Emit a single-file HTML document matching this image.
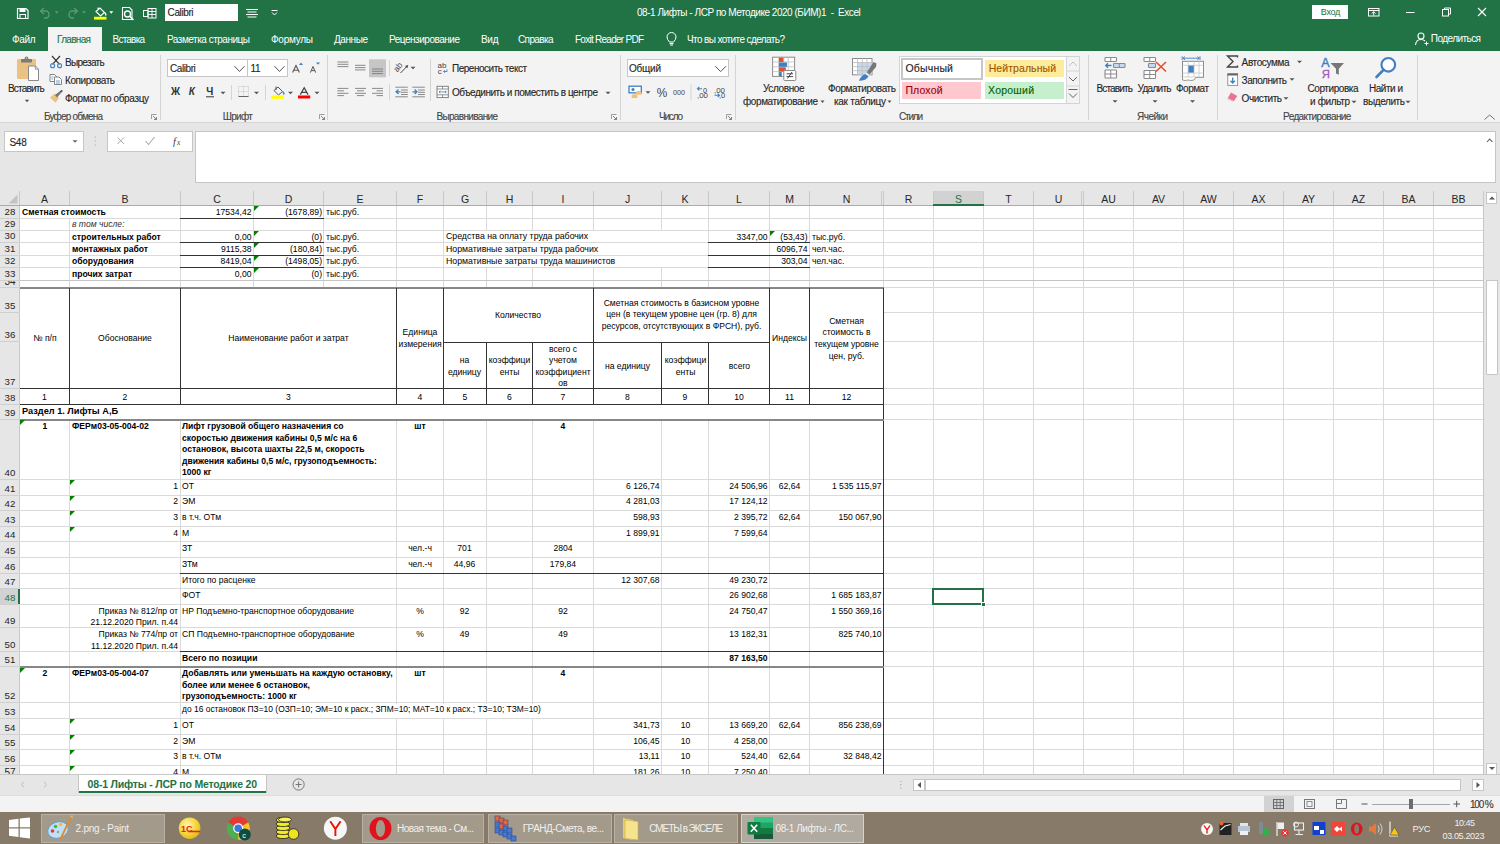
<!DOCTYPE html><html><head><meta charset="utf-8"><style>html,body{margin:0;padding:0;width:1500px;height:844px;overflow:hidden;background:#fff;position:relative}.a{position:absolute}.t{white-space:pre;font-family:"Liberation Sans",sans-serif}svg{display:block}</style></head><body>
<div class="a" style="left:0px;top:0px;width:1500px;height:51px;background:#217346;"></div>
<div class="a" style="left:48px;top:27px;width:54px;height:24px;background:#f3f3f3;"></div>
<div class="a" style="left:0px;top:51px;width:1500px;height:72px;background:#f3f3f3;"></div>
<div class="a" style="left:0px;top:122px;width:1500px;height:1px;background:#d6d6d6"></div>
<div class="a" style="left:0px;top:123px;width:1500px;height:68px;background:#e6e6e6;"></div>
<div class="a t" style="top:7.04px;left:637px;font-size:10px;line-height:12px;color:#fff;letter-spacing:-0.466px;">08-1 Лифты - ЛСР по Методике 2020 (БИМ)1&nbsp; -&nbsp; Excel</div>
<div class="a" style="left:165px;top:4px;width:73px;height:17px;background:#fff;"></div>
<div class="a t" style="top:7.04px;left:167.6px;font-size:10px;line-height:12px;color:#222;letter-spacing:-0.390px;-webkit-text-stroke:0.12px currentColor;">Calibri</div>
<div class="a" style="left:1312px;top:5px;width:36px;height:14px;background:#fff;"></div>
<div class="a t" style="top:7.38px;left:1320.8px;font-size:9px;line-height:11px;color:#217346;letter-spacing:-0.300px;-webkit-text-stroke:0.12px currentColor;-webkit-text-stroke:0">Вход</div>
<div class="a t" style="top:33.53px;left:12px;font-size:10px;line-height:12px;color:#fff;letter-spacing:-0.300px;">Файл</div>
<div class="a t" style="top:33.53px;left:57px;font-size:10px;line-height:12px;color:#217346;letter-spacing:-0.677px;-webkit-text-stroke:0.12px currentColor;">Главная</div>
<div class="a t" style="top:33.53px;left:112.6px;font-size:10px;line-height:12px;color:#fff;letter-spacing:-0.795px;">Вставка</div>
<div class="a t" style="top:33.53px;left:167px;font-size:10px;line-height:12px;color:#fff;letter-spacing:-0.482px;">Разметка страницы</div>
<div class="a t" style="top:33.53px;left:271px;font-size:10px;line-height:12px;color:#fff;letter-spacing:-0.253px;">Формулы</div>
<div class="a t" style="top:33.53px;left:334px;font-size:10px;line-height:12px;color:#fff;letter-spacing:-0.426px;">Данные</div>
<div class="a t" style="top:33.53px;left:389px;font-size:10px;line-height:12px;color:#fff;letter-spacing:-0.478px;">Рецензирование</div>
<div class="a t" style="top:33.53px;left:481px;font-size:10px;line-height:12px;color:#fff;letter-spacing:-0.300px;">Вид</div>
<div class="a t" style="top:33.53px;left:518px;font-size:10px;line-height:12px;color:#fff;letter-spacing:-0.621px;">Справка</div>
<div class="a t" style="top:33.53px;left:575px;font-size:10px;line-height:12px;color:#fff;letter-spacing:-0.735px;">Foxit Reader PDF</div>
<div class="a t" style="top:33.53px;left:687px;font-size:10px;line-height:12px;color:#fff;letter-spacing:-0.597px;">Что вы хотите сделать?</div>
<div class="a t" style="top:33.03px;left:1430.8px;font-size:10px;line-height:12px;color:#fff;letter-spacing:-0.558px;">Поделиться</div>
<div class="a t" style="top:110.53px;left:44px;font-size:10px;line-height:12px;color:#444;letter-spacing:-0.814px;-webkit-text-stroke:0.12px currentColor;">Буфер обмена</div>
<div class="a t" style="top:110.53px;left:222.8px;font-size:10px;line-height:12px;color:#444;letter-spacing:-0.725px;-webkit-text-stroke:0.12px currentColor;">Шрифт</div>
<div class="a t" style="top:110.53px;left:436.4px;font-size:10px;line-height:12px;color:#444;letter-spacing:-0.658px;-webkit-text-stroke:0.12px currentColor;">Выравнивание</div>
<div class="a t" style="top:110.53px;left:659px;font-size:10px;line-height:12px;color:#444;letter-spacing:-1.190px;-webkit-text-stroke:0.12px currentColor;">Число</div>
<div class="a t" style="top:110.53px;left:899px;font-size:10px;line-height:12px;color:#444;letter-spacing:-1.200px;-webkit-text-stroke:0.12px currentColor;">Стили</div>
<div class="a t" style="top:110.53px;left:1137px;font-size:10px;line-height:12px;color:#444;letter-spacing:-0.508px;-webkit-text-stroke:0.12px currentColor;">Ячейки</div>
<div class="a t" style="top:110.53px;left:1283px;font-size:10px;line-height:12px;color:#444;letter-spacing:-0.598px;-webkit-text-stroke:0.12px currentColor;">Редактирование</div>
<div class="a" style="left:160px;top:55px;width:1px;height:65px;background:#d4d4d4"></div>
<div class="a" style="left:327px;top:55px;width:1px;height:65px;background:#d4d4d4"></div>
<div class="a" style="left:620px;top:55px;width:1px;height:65px;background:#d4d4d4"></div>
<div class="a" style="left:735px;top:55px;width:1px;height:65px;background:#d4d4d4"></div>
<div class="a" style="left:1088px;top:55px;width:1px;height:65px;background:#d4d4d4"></div>
<div class="a" style="left:1217px;top:55px;width:1px;height:65px;background:#d4d4d4"></div>
<div class="a" style="left:1417px;top:55px;width:1px;height:65px;background:#d4d4d4"></div>
<div class="a t" style="top:83.03px;left:8px;font-size:10px;line-height:12px;color:#262626;letter-spacing:-0.798px;-webkit-text-stroke:0.12px currentColor;">Вставить</div>
<div class="a t" style="top:56.53px;left:65px;font-size:10px;line-height:12px;color:#262626;letter-spacing:-0.683px;-webkit-text-stroke:0.12px currentColor;">Вырезать</div>
<div class="a t" style="top:74.53px;left:65px;font-size:10px;line-height:12px;color:#262626;letter-spacing:-0.427px;-webkit-text-stroke:0.12px currentColor;">Копировать</div>
<div class="a t" style="top:92.53px;left:65px;font-size:10px;line-height:12px;color:#262626;letter-spacing:-0.354px;-webkit-text-stroke:0.12px currentColor;">Формат по образцу</div>
<div class="a" style="left:167px;top:59px;width:81px;height:18px;background:#fff;border:1px solid #c6c6c6;box-sizing:border-box;"></div>
<div class="a" style="left:247px;top:59px;width:41px;height:18px;background:#fff;border:1px solid #c6c6c6;box-sizing:border-box;"></div>
<div class="a t" style="top:63.03px;left:170px;font-size:10px;line-height:12px;color:#262626;letter-spacing:-0.423px;-webkit-text-stroke:0.12px currentColor;">Calibri</div>
<div class="a t" style="top:63.03px;left:250.4px;font-size:10px;line-height:12px;color:#262626;letter-spacing:-0.300px;-webkit-text-stroke:0.12px currentColor;">11</div>
<div class="a t" style="top:63.03px;left:452px;font-size:10px;line-height:12px;color:#262626;letter-spacing:-0.481px;-webkit-text-stroke:0.12px currentColor;">Переносить текст</div>
<div class="a t" style="top:86.53px;left:452px;font-size:10px;line-height:12px;color:#262626;letter-spacing:-0.462px;-webkit-text-stroke:0.12px currentColor;">Объединить и поместить в центре</div>
<div class="a" style="left:627px;top:59px;width:102px;height:18px;background:#fff;border:1px solid #c6c6c6;box-sizing:border-box;"></div>
<div class="a t" style="top:63.03px;left:629px;font-size:10px;line-height:12px;color:#262626;letter-spacing:-0.226px;-webkit-text-stroke:0.12px currentColor;">Общий</div>
<div class="a t" style="top:83.03px;left:763px;font-size:10px;line-height:12px;color:#262626;letter-spacing:-0.364px;-webkit-text-stroke:0.12px currentColor;">Условное</div>
<div class="a t" style="top:95.53px;left:743px;font-size:10px;line-height:12px;color:#262626;letter-spacing:-0.407px;-webkit-text-stroke:0.12px currentColor;">форматирование</div>
<div class="a t" style="top:83.03px;left:828px;font-size:10px;line-height:12px;color:#262626;letter-spacing:-0.380px;-webkit-text-stroke:0.12px currentColor;">Форматировать</div>
<div class="a t" style="top:95.53px;left:834px;font-size:10px;line-height:12px;color:#262626;letter-spacing:-0.277px;-webkit-text-stroke:0.12px currentColor;">как таблицу</div>
<div class="a" style="left:899px;top:56px;width:168px;height:48px;background:#fff;border:1px solid #d4d4d4;box-sizing:border-box;"></div>
<div class="a" style="left:901px;top:58px;width:82px;height:22px;background:#fff;border:2px solid #c6c6c6;box-sizing:border-box;"></div>
<div class="a t" style="top:62.36px;left:905.4px;font-size:10.5px;line-height:13px;color:#222;letter-spacing:0.198px;-webkit-text-stroke:0.12px currentColor;">Обычный</div>
<div class="a" style="left:985px;top:60px;width:79px;height:17px;background:#ffeb9c;"></div>
<div class="a t" style="top:62.36px;left:988.7px;font-size:10.5px;line-height:13px;color:#9c5700;letter-spacing:0.072px;-webkit-text-stroke:0.12px currentColor;">Нейтральный</div>
<div class="a" style="left:902px;top:82px;width:79px;height:17px;background:#ffc7ce;"></div>
<div class="a t" style="top:84.36px;left:905.4px;font-size:10.5px;line-height:13px;color:#9c0006;letter-spacing:0.150px;-webkit-text-stroke:0.12px currentColor;">Плохой</div>
<div class="a" style="left:985px;top:82px;width:79px;height:17px;background:#c6efce;"></div>
<div class="a t" style="top:84.36px;left:988px;font-size:10.5px;line-height:13px;color:#006100;letter-spacing:0.240px;-webkit-text-stroke:0.12px currentColor;">Хороший</div>
<div class="a" style="left:1066px;top:56px;width:14px;height:48px;background:#f3f3f3;border:1px solid #d4d4d4;box-sizing:border-box;"></div>
<div class="a t" style="top:83.03px;left:1096.5px;font-size:10px;line-height:12px;color:#262626;letter-spacing:-0.841px;-webkit-text-stroke:0.12px currentColor;">Вставить</div>
<div class="a t" style="top:83.03px;left:1137.5px;font-size:10px;line-height:12px;color:#262626;letter-spacing:-0.696px;-webkit-text-stroke:0.12px currentColor;">Удалить</div>
<div class="a t" style="top:83.03px;left:1176px;font-size:10px;line-height:12px;color:#262626;letter-spacing:-0.505px;-webkit-text-stroke:0.12px currentColor;">Формат</div>
<div class="a t" style="top:56.53px;left:1241.6px;font-size:10px;line-height:12px;color:#262626;letter-spacing:-0.386px;-webkit-text-stroke:0.12px currentColor;">Автосумма</div>
<div class="a t" style="top:74.53px;left:1241.6px;font-size:10px;line-height:12px;color:#262626;letter-spacing:-0.462px;-webkit-text-stroke:0.12px currentColor;">Заполнить</div>
<div class="a t" style="top:92.53px;left:1241.6px;font-size:10px;line-height:12px;color:#262626;letter-spacing:-0.447px;-webkit-text-stroke:0.12px currentColor;">Очистить</div>
<div class="a t" style="top:83.03px;left:1307.5px;font-size:10px;line-height:12px;color:#262626;letter-spacing:-0.431px;-webkit-text-stroke:0.12px currentColor;">Сортировка</div>
<div class="a t" style="top:95.53px;left:1310px;font-size:10px;line-height:12px;color:#262626;letter-spacing:-0.369px;-webkit-text-stroke:0.12px currentColor;">и фильтр</div>
<div class="a t" style="top:83.03px;left:1369px;font-size:10px;line-height:12px;color:#262626;letter-spacing:-0.483px;-webkit-text-stroke:0.12px currentColor;">Найти и</div>
<div class="a t" style="top:95.53px;left:1363px;font-size:10px;line-height:12px;color:#262626;letter-spacing:-0.397px;-webkit-text-stroke:0.12px currentColor;">выделить</div>
<div class="a" style="left:4px;top:131px;width:80px;height:21px;background:#fff;border:1px solid #c6c6c6;box-sizing:border-box;"></div>
<div class="a t" style="top:136.53px;left:9.5px;font-size:10px;line-height:12px;color:#262626;letter-spacing:-0.300px;-webkit-text-stroke:0.12px currentColor;">S48</div>
<div class="a" style="left:107px;top:131px;width:86px;height:21px;background:#fff;border:1px solid #c6c6c6;box-sizing:border-box;"></div>
<div class="a" style="left:195px;top:131px;width:1301px;height:52px;background:#fff;border:1px solid #c6c6c6;box-sizing:border-box;"></div>
<div class="a" style="left:1484px;top:191px;width:16px;height:584px;background:#e6e6e6;"></div>
<div class="a" style="left:1486px;top:192px;width:11px;height:12px;background:#fff;border:1px solid #c6c6c6;box-sizing:border-box;"></div>
<div class="a" style="left:1486px;top:763px;width:11px;height:12px;background:#fff;border:1px solid #c6c6c6;box-sizing:border-box;"></div>
<div class="a" style="left:1486px;top:280px;width:12px;height:95px;background:#fff;border:1px solid #c6c6c6;box-sizing:border-box;"></div>
<div class="a" style="left:0px;top:775px;width:1500px;height:20px;background:#e6e6e6;"></div>
<div class="a" style="left:0px;top:774px;width:1500px;height:1px;background:#c6c6c6"></div>
<div class="a" style="left:78px;top:774px;width:189px;height:19px;background:#fff;"></div>
<div class="a" style="left:78px;top:774px;width:1px;height:19px;background:#c6c6c6"></div>
<div class="a" style="left:266px;top:774px;width:1px;height:19px;background:#c6c6c6"></div>
<div class="a" style="left:79px;top:791px;width:187px;height:2px;background:#217346"></div>
<div class="a t" style="top:778.36px;left:87.6px;font-size:10.5px;line-height:13px;color:#217346;letter-spacing:-0.198px;font-weight:bold;">08-1 Лифты - ЛСР по Методике 20</div>
<div class="a" style="left:913px;top:779px;width:12px;height:12px;background:#fff;border:1px solid #c6c6c6;box-sizing:border-box;"></div>
<div class="a" style="left:925px;top:779px;width:536px;height:12px;background:#fff;border:1px solid #c6c6c6;box-sizing:border-box;"></div>
<div class="a" style="left:1472px;top:779px;width:12px;height:12px;background:#fff;border:1px solid #c6c6c6;box-sizing:border-box;"></div>
<div class="a" style="left:0px;top:795px;width:1500px;height:18px;background:#f3f3f3;"></div>
<div class="a" style="left:0px;top:795px;width:1500px;height:1px;background:#dcdcdc"></div>
<div class="a" style="left:1264px;top:796px;width:30px;height:17px;background:#d2d2d2;"></div>
<div class="a t" style="top:798.53px;left:1470px;font-size:10px;line-height:12px;color:#333;letter-spacing:-1.200px;-webkit-text-stroke:0.12px currentColor;">100 %</div>
<div class="a" style="left:1372px;top:804px;width:78px;height:1px;background:#a6a6a6"></div>
<div class="a" style="left:1409px;top:799px;width:4px;height:10px;background:#6d6d6d;"></div>
<div class="a" style="left:0px;top:191px;width:1483px;height:14px;background:#e6e6e6;"></div>
<div class="a" style="left:0px;top:205px;width:19px;height:570px;background:#e6e6e6;"></div>
<div class="a" style="left:20px;top:206px;width:1463px;height:568px;background:#ffffff;"></div>
<svg class="a" style="left:8px;top:194px;" width="10" height="10" viewBox="0 0 10 10"><path d="M9.5 0.5 L9.5 9.5 L0.5 9.5 Z" fill="#c3c3c3"/></svg>
<div class="a" style="left:69px;top:191px;width:1px;height:14px;background:#c9c9c9"></div>
<div class="a" style="left:180px;top:191px;width:1px;height:14px;background:#c9c9c9"></div>
<div class="a" style="left:253px;top:191px;width:1px;height:14px;background:#c9c9c9"></div>
<div class="a" style="left:323px;top:191px;width:1px;height:14px;background:#c9c9c9"></div>
<div class="a" style="left:396px;top:191px;width:1px;height:14px;background:#c9c9c9"></div>
<div class="a" style="left:443px;top:191px;width:1px;height:14px;background:#c9c9c9"></div>
<div class="a" style="left:486px;top:191px;width:1px;height:14px;background:#c9c9c9"></div>
<div class="a" style="left:532px;top:191px;width:1px;height:14px;background:#c9c9c9"></div>
<div class="a" style="left:593px;top:191px;width:1px;height:14px;background:#c9c9c9"></div>
<div class="a" style="left:661px;top:191px;width:1px;height:14px;background:#c9c9c9"></div>
<div class="a" style="left:708px;top:191px;width:1px;height:14px;background:#c9c9c9"></div>
<div class="a" style="left:769px;top:191px;width:1px;height:14px;background:#c9c9c9"></div>
<div class="a" style="left:809px;top:191px;width:1px;height:14px;background:#c9c9c9"></div>
<div class="a" style="left:883px;top:191px;width:1px;height:14px;background:#c9c9c9"></div>
<div class="a" style="left:933px;top:191px;width:1px;height:14px;background:#c9c9c9"></div>
<div class="a" style="left:983px;top:191px;width:1px;height:14px;background:#c9c9c9"></div>
<div class="a" style="left:1033px;top:191px;width:1px;height:14px;background:#c9c9c9"></div>
<div class="a" style="left:1083px;top:191px;width:1px;height:14px;background:#c9c9c9"></div>
<div class="a" style="left:1133px;top:191px;width:1px;height:14px;background:#c9c9c9"></div>
<div class="a" style="left:1183px;top:191px;width:1px;height:14px;background:#c9c9c9"></div>
<div class="a" style="left:1233px;top:191px;width:1px;height:14px;background:#c9c9c9"></div>
<div class="a" style="left:1283px;top:191px;width:1px;height:14px;background:#c9c9c9"></div>
<div class="a" style="left:1333px;top:191px;width:1px;height:14px;background:#c9c9c9"></div>
<div class="a" style="left:1383px;top:191px;width:1px;height:14px;background:#c9c9c9"></div>
<div class="a" style="left:1433px;top:191px;width:1px;height:14px;background:#c9c9c9"></div>
<div class="a" style="left:1483px;top:191px;width:1px;height:14px;background:#c9c9c9"></div>
<div class="a" style="left:19px;top:191px;width:1px;height:584px;background:#c9c9c9"></div>
<div class="a" style="left:881px;top:191px;width:1px;height:14px;background:#c9c9c9"></div>
<div class="a" style="left:1081px;top:191px;width:1px;height:14px;background:#c9c9c9"></div>
<div class="a" style="left:0px;top:205px;width:1483px;height:1px;background:#ababab"></div>
<div class="a" style="left:934px;top:191px;width:49px;height:14px;background:#d2d2d2;"></div>
<div class="a t" style="top:192.86px;font-size:10.5px;line-height:13px;color:#262626;left:-255.5px;width:600px;text-align:center;">A</div>
<div class="a t" style="top:192.86px;font-size:10.5px;line-height:13px;color:#262626;left:-175.0px;width:600px;text-align:center;">B</div>
<div class="a t" style="top:192.86px;font-size:10.5px;line-height:13px;color:#262626;left:-83.0px;width:600px;text-align:center;">C</div>
<div class="a t" style="top:192.86px;font-size:10.5px;line-height:13px;color:#262626;left:-11.5px;width:600px;text-align:center;">D</div>
<div class="a t" style="top:192.86px;font-size:10.5px;line-height:13px;color:#262626;left:60.0px;width:600px;text-align:center;">E</div>
<div class="a t" style="top:192.86px;font-size:10.5px;line-height:13px;color:#262626;left:120.0px;width:600px;text-align:center;">F</div>
<div class="a t" style="top:192.86px;font-size:10.5px;line-height:13px;color:#262626;left:165.0px;width:600px;text-align:center;">G</div>
<div class="a t" style="top:192.86px;font-size:10.5px;line-height:13px;color:#262626;left:209.5px;width:600px;text-align:center;">H</div>
<div class="a t" style="top:192.86px;font-size:10.5px;line-height:13px;color:#262626;left:263.0px;width:600px;text-align:center;">I</div>
<div class="a t" style="top:192.86px;font-size:10.5px;line-height:13px;color:#262626;left:327.5px;width:600px;text-align:center;">J</div>
<div class="a t" style="top:192.86px;font-size:10.5px;line-height:13px;color:#262626;left:385.0px;width:600px;text-align:center;">K</div>
<div class="a t" style="top:192.86px;font-size:10.5px;line-height:13px;color:#262626;left:439.0px;width:600px;text-align:center;">L</div>
<div class="a t" style="top:192.86px;font-size:10.5px;line-height:13px;color:#262626;left:489.5px;width:600px;text-align:center;">M</div>
<div class="a t" style="top:192.86px;font-size:10.5px;line-height:13px;color:#262626;left:546.5px;width:600px;text-align:center;">N</div>
<div class="a t" style="top:192.86px;font-size:10.5px;line-height:13px;color:#262626;left:608.5px;width:600px;text-align:center;">R</div>
<div class="a t" style="top:192.86px;font-size:10.5px;line-height:13px;color:#217346;left:658.5px;width:600px;text-align:center;">S</div>
<div class="a t" style="top:192.86px;font-size:10.5px;line-height:13px;color:#262626;left:708.5px;width:600px;text-align:center;">T</div>
<div class="a t" style="top:192.86px;font-size:10.5px;line-height:13px;color:#262626;left:758.5px;width:600px;text-align:center;">U</div>
<div class="a t" style="top:192.86px;font-size:10.5px;line-height:13px;color:#262626;left:808.5px;width:600px;text-align:center;">AU</div>
<div class="a t" style="top:192.86px;font-size:10.5px;line-height:13px;color:#262626;left:858.5px;width:600px;text-align:center;">AV</div>
<div class="a t" style="top:192.86px;font-size:10.5px;line-height:13px;color:#262626;left:908.5px;width:600px;text-align:center;">AW</div>
<div class="a t" style="top:192.86px;font-size:10.5px;line-height:13px;color:#262626;left:958.5px;width:600px;text-align:center;">AX</div>
<div class="a t" style="top:192.86px;font-size:10.5px;line-height:13px;color:#262626;left:1008.5px;width:600px;text-align:center;">AY</div>
<div class="a t" style="top:192.86px;font-size:10.5px;line-height:13px;color:#262626;left:1058.5px;width:600px;text-align:center;">AZ</div>
<div class="a t" style="top:192.86px;font-size:10.5px;line-height:13px;color:#262626;left:1108.5px;width:600px;text-align:center;">BA</div>
<div class="a t" style="top:192.86px;font-size:10.5px;line-height:13px;color:#262626;left:1158.5px;width:600px;text-align:center;">BB</div>
<div class="a" style="left:933px;top:204px;width:51px;height:2px;background:#217346"></div>
<div class="a" style="left:69px;top:218px;width:1px;height:556px;background:#dadada"></div>
<div class="a" style="left:180px;top:206px;width:1px;height:568px;background:#dadada"></div>
<div class="a" style="left:253px;top:206px;width:1px;height:214px;background:#dadada"></div>
<div class="a" style="left:323px;top:206px;width:1px;height:214px;background:#dadada"></div>
<div class="a" style="left:396px;top:206px;width:1px;height:498px;background:#dadada"></div>
<div class="a" style="left:396px;top:719px;width:1px;height:55px;background:#dadada"></div>
<div class="a" style="left:443px;top:206px;width:1px;height:498px;background:#dadada"></div>
<div class="a" style="left:443px;top:719px;width:1px;height:55px;background:#dadada"></div>
<div class="a" style="left:486px;top:206px;width:1px;height:25px;background:#dadada"></div>
<div class="a" style="left:486px;top:267px;width:1px;height:437px;background:#dadada"></div>
<div class="a" style="left:486px;top:719px;width:1px;height:55px;background:#dadada"></div>
<div class="a" style="left:532px;top:206px;width:1px;height:25px;background:#dadada"></div>
<div class="a" style="left:532px;top:267px;width:1px;height:437px;background:#dadada"></div>
<div class="a" style="left:532px;top:719px;width:1px;height:55px;background:#dadada"></div>
<div class="a" style="left:593px;top:206px;width:1px;height:25px;background:#dadada"></div>
<div class="a" style="left:593px;top:267px;width:1px;height:507px;background:#dadada"></div>
<div class="a" style="left:661px;top:206px;width:1px;height:25px;background:#dadada"></div>
<div class="a" style="left:661px;top:267px;width:1px;height:507px;background:#dadada"></div>
<div class="a" style="left:708px;top:206px;width:1px;height:568px;background:#dadada"></div>
<div class="a" style="left:769px;top:206px;width:1px;height:568px;background:#dadada"></div>
<div class="a" style="left:809px;top:206px;width:1px;height:568px;background:#dadada"></div>
<div class="a" style="left:883px;top:206px;width:1px;height:568px;background:#dadada"></div>
<div class="a" style="left:933px;top:206px;width:1px;height:568px;background:#dadada"></div>
<div class="a" style="left:983px;top:206px;width:1px;height:568px;background:#dadada"></div>
<div class="a" style="left:1033px;top:206px;width:1px;height:568px;background:#dadada"></div>
<div class="a" style="left:1083px;top:206px;width:1px;height:568px;background:#dadada"></div>
<div class="a" style="left:1133px;top:206px;width:1px;height:568px;background:#dadada"></div>
<div class="a" style="left:1183px;top:206px;width:1px;height:568px;background:#dadada"></div>
<div class="a" style="left:1233px;top:206px;width:1px;height:568px;background:#dadada"></div>
<div class="a" style="left:1283px;top:206px;width:1px;height:568px;background:#dadada"></div>
<div class="a" style="left:1333px;top:206px;width:1px;height:568px;background:#dadada"></div>
<div class="a" style="left:1383px;top:206px;width:1px;height:568px;background:#dadada"></div>
<div class="a" style="left:1433px;top:206px;width:1px;height:568px;background:#dadada"></div>
<div class="a" style="left:1483px;top:206px;width:1px;height:568px;background:#dadada"></div>
<div class="a" style="left:0px;top:218px;width:1483px;height:1px;background:#dadada"></div>
<div class="a" style="left:0px;top:230px;width:1483px;height:1px;background:#dadada"></div>
<div class="a" style="left:0px;top:242px;width:1483px;height:1px;background:#dadada"></div>
<div class="a" style="left:0px;top:255px;width:1483px;height:1px;background:#dadada"></div>
<div class="a" style="left:0px;top:267px;width:1483px;height:1px;background:#dadada"></div>
<div class="a" style="left:0px;top:280px;width:1483px;height:1px;background:#dadada"></div>
<div class="a" style="left:0px;top:287px;width:1483px;height:1px;background:#dadada"></div>
<div class="a" style="left:0px;top:312px;width:1483px;height:1px;background:#dadada"></div>
<div class="a" style="left:0px;top:341px;width:1483px;height:1px;background:#dadada"></div>
<div class="a" style="left:0px;top:388px;width:1483px;height:1px;background:#dadada"></div>
<div class="a" style="left:0px;top:404px;width:1483px;height:1px;background:#dadada"></div>
<div class="a" style="left:0px;top:419px;width:1483px;height:1px;background:#dadada"></div>
<div class="a" style="left:0px;top:479px;width:1483px;height:1px;background:#dadada"></div>
<div class="a" style="left:0px;top:495px;width:1483px;height:1px;background:#dadada"></div>
<div class="a" style="left:0px;top:510px;width:1483px;height:1px;background:#dadada"></div>
<div class="a" style="left:0px;top:526px;width:1483px;height:1px;background:#dadada"></div>
<div class="a" style="left:0px;top:541px;width:1483px;height:1px;background:#dadada"></div>
<div class="a" style="left:0px;top:557px;width:1483px;height:1px;background:#dadada"></div>
<div class="a" style="left:0px;top:573px;width:1483px;height:1px;background:#dadada"></div>
<div class="a" style="left:0px;top:588px;width:1483px;height:1px;background:#dadada"></div>
<div class="a" style="left:0px;top:604px;width:1483px;height:1px;background:#dadada"></div>
<div class="a" style="left:0px;top:627px;width:1483px;height:1px;background:#dadada"></div>
<div class="a" style="left:0px;top:651px;width:1483px;height:1px;background:#dadada"></div>
<div class="a" style="left:0px;top:666px;width:1483px;height:1px;background:#dadada"></div>
<div class="a" style="left:0px;top:702px;width:1483px;height:1px;background:#dadada"></div>
<div class="a" style="left:0px;top:718px;width:1483px;height:1px;background:#dadada"></div>
<div class="a" style="left:0px;top:734px;width:1483px;height:1px;background:#dadada"></div>
<div class="a" style="left:0px;top:749px;width:1483px;height:1px;background:#dadada"></div>
<div class="a" style="left:0px;top:765px;width:1483px;height:1px;background:#dadada"></div>
<div class="a" style="left:0px;top:218px;width:19px;height:1px;background:#cfcfcf"></div>
<div class="a" style="left:0px;top:230px;width:19px;height:1px;background:#cfcfcf"></div>
<div class="a" style="left:0px;top:242px;width:19px;height:1px;background:#cfcfcf"></div>
<div class="a" style="left:0px;top:255px;width:19px;height:1px;background:#cfcfcf"></div>
<div class="a" style="left:0px;top:267px;width:19px;height:1px;background:#cfcfcf"></div>
<div class="a" style="left:0px;top:280px;width:19px;height:1px;background:#cfcfcf"></div>
<div class="a" style="left:0px;top:287px;width:19px;height:1px;background:#cfcfcf"></div>
<div class="a" style="left:0px;top:312px;width:19px;height:1px;background:#cfcfcf"></div>
<div class="a" style="left:0px;top:341px;width:19px;height:1px;background:#cfcfcf"></div>
<div class="a" style="left:0px;top:388px;width:19px;height:1px;background:#cfcfcf"></div>
<div class="a" style="left:0px;top:404px;width:19px;height:1px;background:#cfcfcf"></div>
<div class="a" style="left:0px;top:419px;width:19px;height:1px;background:#cfcfcf"></div>
<div class="a" style="left:0px;top:479px;width:19px;height:1px;background:#cfcfcf"></div>
<div class="a" style="left:0px;top:495px;width:19px;height:1px;background:#cfcfcf"></div>
<div class="a" style="left:0px;top:510px;width:19px;height:1px;background:#cfcfcf"></div>
<div class="a" style="left:0px;top:526px;width:19px;height:1px;background:#cfcfcf"></div>
<div class="a" style="left:0px;top:541px;width:19px;height:1px;background:#cfcfcf"></div>
<div class="a" style="left:0px;top:557px;width:19px;height:1px;background:#cfcfcf"></div>
<div class="a" style="left:0px;top:573px;width:19px;height:1px;background:#cfcfcf"></div>
<div class="a" style="left:0px;top:588px;width:19px;height:1px;background:#cfcfcf"></div>
<div class="a" style="left:0px;top:604px;width:19px;height:1px;background:#cfcfcf"></div>
<div class="a" style="left:0px;top:627px;width:19px;height:1px;background:#cfcfcf"></div>
<div class="a" style="left:0px;top:651px;width:19px;height:1px;background:#cfcfcf"></div>
<div class="a" style="left:0px;top:666px;width:19px;height:1px;background:#cfcfcf"></div>
<div class="a" style="left:0px;top:702px;width:19px;height:1px;background:#cfcfcf"></div>
<div class="a" style="left:0px;top:718px;width:19px;height:1px;background:#cfcfcf"></div>
<div class="a" style="left:0px;top:734px;width:19px;height:1px;background:#cfcfcf"></div>
<div class="a" style="left:0px;top:749px;width:19px;height:1px;background:#cfcfcf"></div>
<div class="a" style="left:0px;top:765px;width:19px;height:1px;background:#cfcfcf"></div>
<div class="a" style="left:20px;top:280px;width:1463px;height:1px;background:#c4c4c4"></div>
<div class="a" style="left:1483px;top:205px;width:1px;height:570px;background:#c6c6c6"></div>
<div class="a" style="left:0px;top:774px;width:1484px;height:1px;background:#c6c6c6"></div>
<div class="a" style="left:0px;top:589px;width:19px;height:15px;background:#d2d2d2;"></div>
<div class="a" style="left:18px;top:589px;width:2px;height:15px;background:#217346"></div>
<div class="a t" style="top:205.94px;font-size:9.7px;line-height:12px;color:#262626;left:-290px;width:600px;text-align:center;">28</div>
<div class="a t" style="top:217.94px;font-size:9.7px;line-height:12px;color:#262626;left:-290px;width:600px;text-align:center;">29</div>
<div class="a t" style="top:229.94px;font-size:9.7px;line-height:12px;color:#262626;left:-290px;width:600px;text-align:center;">30</div>
<div class="a t" style="top:242.94px;font-size:9.7px;line-height:12px;color:#262626;left:-290px;width:600px;text-align:center;">31</div>
<div class="a t" style="top:254.94px;font-size:9.7px;line-height:12px;color:#262626;left:-290px;width:600px;text-align:center;">32</div>
<div class="a t" style="top:267.94px;font-size:9.7px;line-height:12px;color:#262626;left:-290px;width:600px;text-align:center;">33</div>
<div class="a" style="left:0px;top:281px;width:19px;height:6px;overflow:hidden">
<div class="a" style="left:0px;top:-281px;width:1500px;height:844px">
<div class="a t" style="top:275.84px;font-size:10px;line-height:12px;color:#262626;left:-290px;width:600px;text-align:center;">34</div>
</div></div>
<div class="a t" style="top:300.14px;font-size:9.7px;line-height:12px;color:#262626;left:-290px;width:600px;text-align:center;">35</div>
<div class="a t" style="top:329.14px;font-size:9.7px;line-height:12px;color:#262626;left:-290px;width:600px;text-align:center;">36</div>
<div class="a t" style="top:376.14px;font-size:9.7px;line-height:12px;color:#262626;left:-290px;width:600px;text-align:center;">37</div>
<div class="a t" style="top:392.14px;font-size:9.7px;line-height:12px;color:#262626;left:-290px;width:600px;text-align:center;">38</div>
<div class="a t" style="top:407.14px;font-size:9.7px;line-height:12px;color:#262626;left:-290px;width:600px;text-align:center;">39</div>
<div class="a t" style="top:467.14px;font-size:9.7px;line-height:12px;color:#262626;left:-290px;width:600px;text-align:center;">40</div>
<div class="a t" style="top:483.14px;font-size:9.7px;line-height:12px;color:#262626;left:-290px;width:600px;text-align:center;">41</div>
<div class="a t" style="top:498.14px;font-size:9.7px;line-height:12px;color:#262626;left:-290px;width:600px;text-align:center;">42</div>
<div class="a t" style="top:514.14px;font-size:9.7px;line-height:12px;color:#262626;left:-290px;width:600px;text-align:center;">43</div>
<div class="a t" style="top:529.14px;font-size:9.7px;line-height:12px;color:#262626;left:-290px;width:600px;text-align:center;">44</div>
<div class="a t" style="top:545.14px;font-size:9.7px;line-height:12px;color:#262626;left:-290px;width:600px;text-align:center;">45</div>
<div class="a t" style="top:561.14px;font-size:9.7px;line-height:12px;color:#262626;left:-290px;width:600px;text-align:center;">46</div>
<div class="a t" style="top:576.14px;font-size:9.7px;line-height:12px;color:#262626;left:-290px;width:600px;text-align:center;">47</div>
<div class="a t" style="top:592.14px;font-size:9.7px;line-height:12px;color:#217346;left:-290px;width:600px;text-align:center;">48</div>
<div class="a t" style="top:615.14px;font-size:9.7px;line-height:12px;color:#262626;left:-290px;width:600px;text-align:center;">49</div>
<div class="a t" style="top:639.14px;font-size:9.7px;line-height:12px;color:#262626;left:-290px;width:600px;text-align:center;">50</div>
<div class="a t" style="top:654.14px;font-size:9.7px;line-height:12px;color:#262626;left:-290px;width:600px;text-align:center;">51</div>
<div class="a t" style="top:690.14px;font-size:9.7px;line-height:12px;color:#262626;left:-290px;width:600px;text-align:center;">52</div>
<div class="a t" style="top:706.14px;font-size:9.7px;line-height:12px;color:#262626;left:-290px;width:600px;text-align:center;">53</div>
<div class="a t" style="top:722.14px;font-size:9.7px;line-height:12px;color:#262626;left:-290px;width:600px;text-align:center;">54</div>
<div class="a t" style="top:737.14px;font-size:9.7px;line-height:12px;color:#262626;left:-290px;width:600px;text-align:center;">55</div>
<div class="a t" style="top:753.14px;font-size:9.7px;line-height:12px;color:#262626;left:-290px;width:600px;text-align:center;">56</div>
<div class="a" style="left:0px;top:766px;width:19px;height:8px;overflow:hidden">
<div class="a" style="left:0px;top:-766px;width:1500px;height:844px">
<div class="a t" style="top:766.53px;font-size:10px;line-height:12px;color:#262626;left:-290px;width:600px;text-align:center;">57</div>
</div></div>
<div class="a t" style="top:207.02px;font-size:8.6px;line-height:10px;color:#000;font-weight:bold;left:22px;">Сметная стоимость</div>
<div class="a t" style="top:207.02px;font-size:8.6px;line-height:10px;color:#000;left:-348.5px;width:600px;text-align:right;">17534,42</div>
<svg class="a" style="left:254px;top:206px;" width="5" height="5" viewBox="0 0 5 5"><path d="M0 0 L5 0 L0 5 Z" fill="#008000"/></svg>
<div class="a t" style="top:207.02px;font-size:8.6px;line-height:10px;color:#000;left:-278px;width:600px;text-align:right;">(1678,89)</div>
<div class="a t" style="top:207.02px;font-size:8.6px;line-height:10px;color:#000;left:326px;">тыс.руб.</div>
<div class="a t" style="top:219.02px;font-size:8.6px;line-height:10px;color:#333;font-style:italic;left:72px;">в том числе:</div>
<div class="a t" style="top:231.52px;font-size:8.6px;line-height:10px;color:#000;font-weight:bold;left:72px;">строительных работ</div>
<div class="a t" style="top:231.52px;font-size:8.6px;line-height:10px;color:#000;left:-348.5px;width:600px;text-align:right;">0,00</div>
<svg class="a" style="left:254px;top:231px;" width="5" height="5" viewBox="0 0 5 5"><path d="M0 0 L5 0 L0 5 Z" fill="#008000"/></svg>
<div class="a t" style="top:231.52px;font-size:8.6px;line-height:10px;color:#000;left:-278px;width:600px;text-align:right;">(0)</div>
<div class="a t" style="top:231.52px;font-size:8.6px;line-height:10px;color:#000;left:326px;">тыс.руб.</div>
<div class="a t" style="top:243.62px;font-size:8.6px;line-height:10px;color:#000;font-weight:bold;left:72px;">монтажных работ</div>
<div class="a t" style="top:243.62px;font-size:8.6px;line-height:10px;color:#000;left:-348.5px;width:600px;text-align:right;">9115,38</div>
<svg class="a" style="left:254px;top:243px;" width="5" height="5" viewBox="0 0 5 5"><path d="M0 0 L5 0 L0 5 Z" fill="#008000"/></svg>
<div class="a t" style="top:243.62px;font-size:8.6px;line-height:10px;color:#000;left:-278px;width:600px;text-align:right;">(180,84)</div>
<div class="a t" style="top:243.62px;font-size:8.6px;line-height:10px;color:#000;left:326px;">тыс.руб.</div>
<div class="a t" style="top:256.32px;font-size:8.6px;line-height:10px;color:#000;font-weight:bold;left:72px;">оборудования</div>
<div class="a t" style="top:256.32px;font-size:8.6px;line-height:10px;color:#000;left:-348.5px;width:600px;text-align:right;">8419,04</div>
<svg class="a" style="left:254px;top:256px;" width="5" height="5" viewBox="0 0 5 5"><path d="M0 0 L5 0 L0 5 Z" fill="#008000"/></svg>
<div class="a t" style="top:256.32px;font-size:8.6px;line-height:10px;color:#000;left:-278px;width:600px;text-align:right;">(1498,05)</div>
<div class="a t" style="top:256.32px;font-size:8.6px;line-height:10px;color:#000;left:326px;">тыс.руб.</div>
<div class="a t" style="top:268.72px;font-size:8.6px;line-height:10px;color:#000;font-weight:bold;left:72px;">прочих затрат</div>
<div class="a t" style="top:268.72px;font-size:8.6px;line-height:10px;color:#000;left:-348.5px;width:600px;text-align:right;">0,00</div>
<svg class="a" style="left:254px;top:268px;" width="5" height="5" viewBox="0 0 5 5"><path d="M0 0 L5 0 L0 5 Z" fill="#008000"/></svg>
<div class="a t" style="top:268.72px;font-size:8.6px;line-height:10px;color:#000;left:-278px;width:600px;text-align:right;">(0)</div>
<div class="a t" style="top:268.72px;font-size:8.6px;line-height:10px;color:#000;left:326px;">тыс.руб.</div>
<div class="a" style="left:180px;top:218px;width:144px;height:1px;background:#333333"></div>
<div class="a" style="left:180px;top:242px;width:144px;height:1px;background:#333333"></div>
<div class="a" style="left:180px;top:255px;width:144px;height:1px;background:#333333"></div>
<div class="a" style="left:180px;top:267px;width:144px;height:1px;background:#333333"></div>
<div class="a t" style="top:231.47px;font-size:8.75px;line-height:10px;color:#000;left:446px;">Средства на оплату труда рабочих</div>
<div class="a t" style="top:231.52px;font-size:8.6px;line-height:10px;color:#000;left:167.5px;width:600px;text-align:right;">3347,00</div>
<svg class="a" style="left:770px;top:231px;" width="5" height="5" viewBox="0 0 5 5"><path d="M0 0 L5 0 L0 5 Z" fill="#008000"/></svg>
<div class="a t" style="top:231.52px;font-size:8.6px;line-height:10px;color:#000;left:207.5px;width:600px;text-align:right;">(53,43)</div>
<div class="a t" style="top:231.52px;font-size:8.6px;line-height:10px;color:#000;left:812px;">тыс.руб.</div>
<div class="a t" style="top:243.57px;font-size:8.75px;line-height:10px;color:#000;left:446px;">Нормативные затраты труда рабочих</div>
<div class="a t" style="top:243.62px;font-size:8.6px;line-height:10px;color:#000;left:207.5px;width:600px;text-align:right;">6096,74</div>
<div class="a t" style="top:243.62px;font-size:8.6px;line-height:10px;color:#000;left:812px;">чел.час.</div>
<div class="a t" style="top:256.27px;font-size:8.75px;line-height:10px;color:#000;left:446px;">Нормативные затраты труда машинистов</div>
<div class="a t" style="top:256.32px;font-size:8.6px;line-height:10px;color:#000;left:207.5px;width:600px;text-align:right;">303,04</div>
<div class="a t" style="top:256.32px;font-size:8.6px;line-height:10px;color:#000;left:812px;">чел.час.</div>
<div class="a" style="left:708px;top:242px;width:102px;height:1px;background:#333333"></div>
<div class="a" style="left:708px;top:255px;width:102px;height:1px;background:#333333"></div>
<div class="a" style="left:708px;top:267px;width:102px;height:1px;background:#333333"></div>
<div class="a" style="left:20px;top:288px;width:864px;height:132px;background:#ffffff;"></div>
<div class="a" style="left:20px;top:287px;width:864px;height:2px;background:#878787"></div>
<div class="a" style="left:69px;top:288px;width:1px;height:116px;background:#333333"></div>
<div class="a" style="left:180px;top:288px;width:1px;height:116px;background:#333333"></div>
<div class="a" style="left:396px;top:288px;width:1px;height:116px;background:#333333"></div>
<div class="a" style="left:443px;top:288px;width:1px;height:116px;background:#333333"></div>
<div class="a" style="left:593px;top:288px;width:1px;height:116px;background:#333333"></div>
<div class="a" style="left:769px;top:288px;width:1px;height:116px;background:#333333"></div>
<div class="a" style="left:809px;top:288px;width:1px;height:116px;background:#333333"></div>
<div class="a" style="left:883px;top:288px;width:1px;height:116px;background:#333333"></div>
<div class="a" style="left:486px;top:342px;width:1px;height:62px;background:#333333"></div>
<div class="a" style="left:532px;top:342px;width:1px;height:62px;background:#333333"></div>
<div class="a" style="left:661px;top:342px;width:1px;height:62px;background:#333333"></div>
<div class="a" style="left:708px;top:342px;width:1px;height:62px;background:#333333"></div>
<div class="a" style="left:443px;top:342px;width:326px;height:1px;background:#333333"></div>
<div class="a" style="left:20px;top:388px;width:864px;height:1px;background:#333333"></div>
<div class="a" style="left:20px;top:404px;width:864px;height:1px;background:#333333"></div>
<div class="a" style="left:883px;top:288px;width:1px;height:486px;background:#333333"></div>
<div class="a" style="left:20px;top:419px;width:864px;height:2px;background:#878787"></div>
<div class="a t" style="top:332.52px;font-size:8.6px;line-height:10px;color:#000;left:-255px;width:600px;text-align:center;">№ п/п</div>
<div class="a t" style="top:332.52px;font-size:8.6px;line-height:10px;color:#000;left:-175px;width:600px;text-align:center;">Обоснование</div>
<div class="a t" style="top:332.52px;font-size:8.6px;line-height:10px;color:#000;left:-11.5px;width:600px;text-align:center;">Наименование работ и затрат</div>
<div class="a t" style="top:327.02px;font-size:8.6px;line-height:10px;color:#000;left:120px;width:600px;text-align:center;">Единица</div>
<div class="a t" style="top:338.52px;font-size:8.6px;line-height:10px;color:#000;left:120px;width:600px;text-align:center;">измерения</div>
<div class="a t" style="top:309.52px;font-size:8.6px;line-height:10px;color:#000;left:218px;width:600px;text-align:center;">Количество</div>
<div class="a t" style="top:355.02px;font-size:8.6px;line-height:10px;color:#000;left:164.5px;width:600px;text-align:center;">на</div>
<div class="a t" style="top:366.52px;font-size:8.6px;line-height:10px;color:#000;left:164.5px;width:600px;text-align:center;">единицу</div>
<div class="a t" style="top:355.02px;font-size:8.6px;line-height:10px;color:#000;left:209.5px;width:600px;text-align:center;">коэффици</div>
<div class="a t" style="top:366.52px;font-size:8.6px;line-height:10px;color:#000;left:209.5px;width:600px;text-align:center;">енты</div>
<div class="a t" style="top:343.52px;font-size:8.6px;line-height:10px;color:#000;left:263px;width:600px;text-align:center;">всего с</div>
<div class="a t" style="top:355.02px;font-size:8.6px;line-height:10px;color:#000;left:263px;width:600px;text-align:center;">учетом</div>
<div class="a t" style="top:366.52px;font-size:8.6px;line-height:10px;color:#000;left:263px;width:600px;text-align:center;">коэффициент</div>
<div class="a t" style="top:378.02px;font-size:8.6px;line-height:10px;color:#000;left:263px;width:600px;text-align:center;">ов</div>
<div class="a t" style="top:297.82px;font-size:8.6px;line-height:10px;color:#000;left:381.5px;width:600px;text-align:center;">Сметная стоимость в базисном уровне</div>
<div class="a t" style="top:309.42px;font-size:8.6px;line-height:10px;color:#000;left:381.5px;width:600px;text-align:center;">цен (в текущем уровне цен (гр. 8) для</div>
<div class="a t" style="top:321.02px;font-size:8.6px;line-height:10px;color:#000;left:381.5px;width:600px;text-align:center;">ресурсов, отсутствующих в ФРСН), руб.</div>
<div class="a t" style="top:360.52px;font-size:8.6px;line-height:10px;color:#000;left:327.5px;width:600px;text-align:center;">на единицу</div>
<div class="a t" style="top:355.02px;font-size:8.6px;line-height:10px;color:#000;left:385.5px;width:600px;text-align:center;">коэффици</div>
<div class="a t" style="top:366.52px;font-size:8.6px;line-height:10px;color:#000;left:385.5px;width:600px;text-align:center;">енты</div>
<div class="a t" style="top:360.52px;font-size:8.6px;line-height:10px;color:#000;left:439.5px;width:600px;text-align:center;">всего</div>
<div class="a t" style="top:333.02px;font-size:8.6px;line-height:10px;color:#000;left:489.5px;width:600px;text-align:center;">Индексы</div>
<div class="a t" style="top:315.82px;font-size:8.6px;line-height:10px;color:#000;left:546.5px;width:600px;text-align:center;">Сметная</div>
<div class="a t" style="top:327.42px;font-size:8.6px;line-height:10px;color:#000;left:546.5px;width:600px;text-align:center;">стоимость в</div>
<div class="a t" style="top:339.02px;font-size:8.6px;line-height:10px;color:#000;left:546.5px;width:600px;text-align:center;">текущем уровне</div>
<div class="a t" style="top:350.62px;font-size:8.6px;line-height:10px;color:#000;left:546.5px;width:600px;text-align:center;">цен, руб.</div>
<div class="a t" style="top:391.52px;font-size:8.6px;line-height:10px;color:#000;left:-255.5px;width:600px;text-align:center;">1</div>
<div class="a t" style="top:391.52px;font-size:8.6px;line-height:10px;color:#000;left:-175.0px;width:600px;text-align:center;">2</div>
<div class="a t" style="top:391.52px;font-size:8.6px;line-height:10px;color:#000;left:-11.5px;width:600px;text-align:center;">3</div>
<div class="a t" style="top:391.52px;font-size:8.6px;line-height:10px;color:#000;left:120.0px;width:600px;text-align:center;">4</div>
<div class="a t" style="top:391.52px;font-size:8.6px;line-height:10px;color:#000;left:165.0px;width:600px;text-align:center;">5</div>
<div class="a t" style="top:391.52px;font-size:8.6px;line-height:10px;color:#000;left:209.5px;width:600px;text-align:center;">6</div>
<div class="a t" style="top:391.52px;font-size:8.6px;line-height:10px;color:#000;left:263.0px;width:600px;text-align:center;">7</div>
<div class="a t" style="top:391.52px;font-size:8.6px;line-height:10px;color:#000;left:327.5px;width:600px;text-align:center;">8</div>
<div class="a t" style="top:391.52px;font-size:8.6px;line-height:10px;color:#000;left:385.0px;width:600px;text-align:center;">9</div>
<div class="a t" style="top:391.52px;font-size:8.6px;line-height:10px;color:#000;left:439.0px;width:600px;text-align:center;">10</div>
<div class="a t" style="top:391.52px;font-size:8.6px;line-height:10px;color:#000;left:489.5px;width:600px;text-align:center;">11</div>
<div class="a t" style="top:391.52px;font-size:8.6px;line-height:10px;color:#000;left:546.5px;width:600px;text-align:center;">12</div>
<div class="a t" style="top:406.31px;font-size:9.2px;line-height:11px;color:#000;font-weight:bold;left:22px;">Раздел 1. Лифты А,Б</div>
<svg class="a" style="left:20px;top:420px;" width="5" height="5" viewBox="0 0 5 5"><path d="M0 0 L5 0 L0 5 Z" fill="#008000"/></svg>
<div class="a t" style="top:421.02px;font-size:8.6px;line-height:10px;color:#000;font-weight:bold;left:-255px;width:600px;text-align:center;">1</div>
<div class="a t" style="top:421.02px;font-size:8.6px;line-height:10px;color:#000;font-weight:bold;left:72px;">ФЕРм03-05-004-02</div>
<div class="a t" style="top:421.02px;font-size:8.6px;line-height:10px;color:#000;font-weight:bold;left:182px;">Лифт грузовой общего назначения со</div>
<div class="a t" style="top:432.62px;font-size:8.6px;line-height:10px;color:#000;font-weight:bold;left:182px;">скоростью движения кабины 0,5 м/с на 6</div>
<div class="a t" style="top:444.22px;font-size:8.6px;line-height:10px;color:#000;font-weight:bold;left:182px;">остановок, высота шахты 22,5 м, скорость</div>
<div class="a t" style="top:455.82px;font-size:8.6px;line-height:10px;color:#000;font-weight:bold;left:182px;">движения кабины 0,5 м/с, грузоподъемность:</div>
<div class="a t" style="top:467.42px;font-size:8.6px;line-height:10px;color:#000;font-weight:bold;left:182px;">1000 кг</div>
<div class="a t" style="top:421.02px;font-size:8.6px;line-height:10px;color:#000;font-weight:bold;left:120px;width:600px;text-align:center;">шт</div>
<div class="a t" style="top:421.02px;font-size:8.6px;line-height:10px;color:#000;font-weight:bold;left:263px;width:600px;text-align:center;">4</div>
<svg class="a" style="left:70px;top:480px;" width="5" height="5" viewBox="0 0 5 5"><path d="M0 0 L5 0 L0 5 Z" fill="#008000"/></svg>
<div class="a t" style="top:480.72px;font-size:8.6px;line-height:10px;color:#000;left:-422px;width:600px;text-align:right;">1</div>
<div class="a t" style="top:480.72px;font-size:8.6px;line-height:10px;color:#000;left:182px;">ОТ</div>
<div class="a t" style="top:480.72px;font-size:8.6px;line-height:10px;color:#000;left:59.5px;width:600px;text-align:right;">6 126,74</div>
<div class="a t" style="top:480.72px;font-size:8.6px;line-height:10px;color:#000;left:167.5px;width:600px;text-align:right;">24 506,96</div>
<div class="a t" style="top:480.72px;font-size:8.6px;line-height:10px;color:#000;left:489.5px;width:600px;text-align:center;">62,64</div>
<div class="a t" style="top:480.72px;font-size:8.6px;line-height:10px;color:#000;left:281.5px;width:600px;text-align:right;">1 535 115,97</div>
<svg class="a" style="left:70px;top:496px;" width="5" height="5" viewBox="0 0 5 5"><path d="M0 0 L5 0 L0 5 Z" fill="#008000"/></svg>
<div class="a t" style="top:496.32px;font-size:8.6px;line-height:10px;color:#000;left:-422px;width:600px;text-align:right;">2</div>
<div class="a t" style="top:496.32px;font-size:8.6px;line-height:10px;color:#000;left:182px;">ЭМ</div>
<div class="a t" style="top:496.32px;font-size:8.6px;line-height:10px;color:#000;left:59.5px;width:600px;text-align:right;">4 281,03</div>
<div class="a t" style="top:496.32px;font-size:8.6px;line-height:10px;color:#000;left:167.5px;width:600px;text-align:right;">17 124,12</div>
<svg class="a" style="left:70px;top:511px;" width="5" height="5" viewBox="0 0 5 5"><path d="M0 0 L5 0 L0 5 Z" fill="#008000"/></svg>
<div class="a t" style="top:511.92px;font-size:8.6px;line-height:10px;color:#000;left:-422px;width:600px;text-align:right;">3</div>
<div class="a t" style="top:511.92px;font-size:8.6px;line-height:10px;color:#000;left:182px;">в т.ч. ОТм</div>
<div class="a t" style="top:511.92px;font-size:8.6px;line-height:10px;color:#000;left:59.5px;width:600px;text-align:right;">598,93</div>
<div class="a t" style="top:511.92px;font-size:8.6px;line-height:10px;color:#000;left:167.5px;width:600px;text-align:right;">2 395,72</div>
<div class="a t" style="top:511.92px;font-size:8.6px;line-height:10px;color:#000;left:489.5px;width:600px;text-align:center;">62,64</div>
<div class="a t" style="top:511.92px;font-size:8.6px;line-height:10px;color:#000;left:281.5px;width:600px;text-align:right;">150 067,90</div>
<svg class="a" style="left:70px;top:527px;" width="5" height="5" viewBox="0 0 5 5"><path d="M0 0 L5 0 L0 5 Z" fill="#008000"/></svg>
<div class="a t" style="top:527.62px;font-size:8.6px;line-height:10px;color:#000;left:-422px;width:600px;text-align:right;">4</div>
<div class="a t" style="top:527.62px;font-size:8.6px;line-height:10px;color:#000;left:182px;">М</div>
<div class="a t" style="top:527.62px;font-size:8.6px;line-height:10px;color:#000;left:59.5px;width:600px;text-align:right;">1 899,91</div>
<div class="a t" style="top:527.62px;font-size:8.6px;line-height:10px;color:#000;left:167.5px;width:600px;text-align:right;">7 599,64</div>
<div class="a t" style="top:543.22px;font-size:8.6px;line-height:10px;color:#000;left:182px;">ЗТ</div>
<div class="a t" style="top:543.22px;font-size:8.6px;line-height:10px;color:#000;left:120px;width:600px;text-align:center;">чел.-ч</div>
<div class="a t" style="top:543.22px;font-size:8.6px;line-height:10px;color:#000;left:164.5px;width:600px;text-align:center;">701</div>
<div class="a t" style="top:543.22px;font-size:8.6px;line-height:10px;color:#000;left:263px;width:600px;text-align:center;">2804</div>
<div class="a t" style="top:558.62px;font-size:8.6px;line-height:10px;color:#000;left:182px;">ЗТм</div>
<div class="a t" style="top:558.62px;font-size:8.6px;line-height:10px;color:#000;left:120px;width:600px;text-align:center;">чел.-ч</div>
<div class="a t" style="top:558.62px;font-size:8.6px;line-height:10px;color:#000;left:164.5px;width:600px;text-align:center;">44,96</div>
<div class="a t" style="top:558.62px;font-size:8.6px;line-height:10px;color:#000;left:263px;width:600px;text-align:center;">179,84</div>
<div class="a" style="left:180px;top:573px;width:704px;height:1px;background:#333333"></div>
<div class="a t" style="top:574.62px;font-size:8.6px;line-height:10px;color:#000;left:182px;">Итого по расценке</div>
<div class="a t" style="top:574.62px;font-size:8.6px;line-height:10px;color:#000;left:59.5px;width:600px;text-align:right;">12 307,68</div>
<div class="a t" style="top:574.62px;font-size:8.6px;line-height:10px;color:#000;left:167.5px;width:600px;text-align:right;">49 230,72</div>
<div class="a t" style="top:590.22px;font-size:8.6px;line-height:10px;color:#000;left:182px;">ФОТ</div>
<div class="a t" style="top:590.22px;font-size:8.6px;line-height:10px;color:#000;left:167.5px;width:600px;text-align:right;">26 902,68</div>
<div class="a t" style="top:590.22px;font-size:8.6px;line-height:10px;color:#000;left:281.5px;width:600px;text-align:right;">1 685 183,87</div>
<div class="a t" style="top:605.62px;font-size:8.6px;line-height:10px;color:#000;left:-422px;width:600px;text-align:right;">Приказ № 812/пр от</div>
<div class="a t" style="top:617.12px;font-size:8.6px;line-height:10px;color:#000;left:-422px;width:600px;text-align:right;">21.12.2020 Прил. п.44</div>
<div class="a t" style="top:605.62px;font-size:8.6px;line-height:10px;color:#000;left:182px;">НР Подъемно-транспортное оборудование</div>
<div class="a t" style="top:605.62px;font-size:8.6px;line-height:10px;color:#000;left:120px;width:600px;text-align:center;">%</div>
<div class="a t" style="top:605.62px;font-size:8.6px;line-height:10px;color:#000;left:164.5px;width:600px;text-align:center;">92</div>
<div class="a t" style="top:605.62px;font-size:8.6px;line-height:10px;color:#000;left:263px;width:600px;text-align:center;">92</div>
<div class="a t" style="top:605.62px;font-size:8.6px;line-height:10px;color:#000;left:167.5px;width:600px;text-align:right;">24 750,47</div>
<div class="a t" style="top:605.62px;font-size:8.6px;line-height:10px;color:#000;left:281.5px;width:600px;text-align:right;">1 550 369,16</div>
<div class="a t" style="top:629.02px;font-size:8.6px;line-height:10px;color:#000;left:-422px;width:600px;text-align:right;">Приказ № 774/пр от</div>
<div class="a t" style="top:640.52px;font-size:8.6px;line-height:10px;color:#000;left:-422px;width:600px;text-align:right;">11.12.2020 Прил. п.44</div>
<div class="a t" style="top:629.02px;font-size:8.6px;line-height:10px;color:#000;left:182px;">СП Подъемно-транспортное оборудование</div>
<div class="a t" style="top:629.02px;font-size:8.6px;line-height:10px;color:#000;left:120px;width:600px;text-align:center;">%</div>
<div class="a t" style="top:629.02px;font-size:8.6px;line-height:10px;color:#000;left:164.5px;width:600px;text-align:center;">49</div>
<div class="a t" style="top:629.02px;font-size:8.6px;line-height:10px;color:#000;left:263px;width:600px;text-align:center;">49</div>
<div class="a t" style="top:629.02px;font-size:8.6px;line-height:10px;color:#000;left:167.5px;width:600px;text-align:right;">13 182,31</div>
<div class="a t" style="top:629.02px;font-size:8.6px;line-height:10px;color:#000;left:281.5px;width:600px;text-align:right;">825 740,10</div>
<div class="a" style="left:180px;top:651px;width:704px;height:1px;background:#333333"></div>
<div class="a t" style="top:652.82px;font-size:8.6px;line-height:10px;color:#000;font-weight:bold;left:182px;">Всего по позиции</div>
<div class="a t" style="top:652.82px;font-size:8.6px;line-height:10px;color:#000;font-weight:bold;left:167.5px;width:600px;text-align:right;">87 163,50</div>
<div class="a" style="left:20px;top:666px;width:864px;height:2px;background:#878787"></div>
<svg class="a" style="left:20px;top:668px;" width="5" height="5" viewBox="0 0 5 5"><path d="M0 0 L5 0 L0 5 Z" fill="#008000"/></svg>
<div class="a t" style="top:668.22px;font-size:8.6px;line-height:10px;color:#000;font-weight:bold;left:-255px;width:600px;text-align:center;">2</div>
<div class="a t" style="top:668.22px;font-size:8.6px;line-height:10px;color:#000;font-weight:bold;left:72px;">ФЕРм03-05-004-07</div>
<div class="a t" style="top:668.22px;font-size:8.6px;line-height:10px;color:#000;font-weight:bold;left:182px;">Добавлять или уменьшать на каждую остановку,</div>
<div class="a t" style="top:679.82px;font-size:8.6px;line-height:10px;color:#000;font-weight:bold;left:182px;">более или менее 6 остановок,</div>
<div class="a t" style="top:691.42px;font-size:8.6px;line-height:10px;color:#000;font-weight:bold;left:182px;">грузоподъемность: 1000 кг</div>
<div class="a t" style="top:668.22px;font-size:8.6px;line-height:10px;color:#000;font-weight:bold;left:120px;width:600px;text-align:center;">шт</div>
<div class="a t" style="top:668.22px;font-size:8.6px;line-height:10px;color:#000;font-weight:bold;left:263px;width:600px;text-align:center;">4</div>
<div class="a t" style="top:704.07px;font-size:8.45px;line-height:10px;color:#000;left:182px;">до 16 остановок ПЗ=10 (ОЗП=10; ЭМ=10 к расх.; ЗПМ=10; МАТ=10 к расх.; ТЗ=10; ТЗМ=10)</div>
<div class="a" style="left:0px;top:206px;width:1483px;height:568px;overflow:hidden">
<div class="a" style="left:0px;top:-206px;width:1500px;height:844px">
<svg class="a" style="left:70px;top:719px;" width="5" height="5" viewBox="0 0 5 5"><path d="M0 0 L5 0 L0 5 Z" fill="#008000"/></svg>
<div class="a t" style="top:719.92px;font-size:8.6px;line-height:10px;color:#000;left:-422px;width:600px;text-align:right;">1</div>
<div class="a t" style="top:719.92px;font-size:8.6px;line-height:10px;color:#000;left:182px;">ОТ</div>
<div class="a t" style="top:719.92px;font-size:8.6px;line-height:10px;color:#000;left:59.5px;width:600px;text-align:right;">341,73</div>
<div class="a t" style="top:719.92px;font-size:8.6px;line-height:10px;color:#000;left:385.5px;width:600px;text-align:center;">10</div>
<div class="a t" style="top:719.92px;font-size:8.6px;line-height:10px;color:#000;left:167.5px;width:600px;text-align:right;">13 669,20</div>
<div class="a t" style="top:719.92px;font-size:8.6px;line-height:10px;color:#000;left:489.5px;width:600px;text-align:center;">62,64</div>
<div class="a t" style="top:719.92px;font-size:8.6px;line-height:10px;color:#000;left:281.5px;width:600px;text-align:right;">856 238,69</div>
<svg class="a" style="left:70px;top:735px;" width="5" height="5" viewBox="0 0 5 5"><path d="M0 0 L5 0 L0 5 Z" fill="#008000"/></svg>
<div class="a t" style="top:735.62px;font-size:8.6px;line-height:10px;color:#000;left:-422px;width:600px;text-align:right;">2</div>
<div class="a t" style="top:735.62px;font-size:8.6px;line-height:10px;color:#000;left:182px;">ЭМ</div>
<div class="a t" style="top:735.62px;font-size:8.6px;line-height:10px;color:#000;left:59.5px;width:600px;text-align:right;">106,45</div>
<div class="a t" style="top:735.62px;font-size:8.6px;line-height:10px;color:#000;left:385.5px;width:600px;text-align:center;">10</div>
<div class="a t" style="top:735.62px;font-size:8.6px;line-height:10px;color:#000;left:167.5px;width:600px;text-align:right;">4 258,00</div>
<svg class="a" style="left:70px;top:750px;" width="5" height="5" viewBox="0 0 5 5"><path d="M0 0 L5 0 L0 5 Z" fill="#008000"/></svg>
<div class="a t" style="top:751.02px;font-size:8.6px;line-height:10px;color:#000;left:-422px;width:600px;text-align:right;">3</div>
<div class="a t" style="top:751.02px;font-size:8.6px;line-height:10px;color:#000;left:182px;">в т.ч. ОТм</div>
<div class="a t" style="top:751.02px;font-size:8.6px;line-height:10px;color:#000;left:59.5px;width:600px;text-align:right;">13,11</div>
<div class="a t" style="top:751.02px;font-size:8.6px;line-height:10px;color:#000;left:385.5px;width:600px;text-align:center;">10</div>
<div class="a t" style="top:751.02px;font-size:8.6px;line-height:10px;color:#000;left:167.5px;width:600px;text-align:right;">524,40</div>
<div class="a t" style="top:751.02px;font-size:8.6px;line-height:10px;color:#000;left:489.5px;width:600px;text-align:center;">62,64</div>
<div class="a t" style="top:751.02px;font-size:8.6px;line-height:10px;color:#000;left:281.5px;width:600px;text-align:right;">32 848,42</div>
<svg class="a" style="left:70px;top:766px;" width="5" height="5" viewBox="0 0 5 5"><path d="M0 0 L5 0 L0 5 Z" fill="#008000"/></svg>
<div class="a t" style="top:766.62px;font-size:8.6px;line-height:10px;color:#000;left:-422px;width:600px;text-align:right;">4</div>
<div class="a t" style="top:766.62px;font-size:8.6px;line-height:10px;color:#000;left:182px;">М</div>
<div class="a t" style="top:766.62px;font-size:8.6px;line-height:10px;color:#000;left:59.5px;width:600px;text-align:right;">181,26</div>
<div class="a t" style="top:766.62px;font-size:8.6px;line-height:10px;color:#000;left:385.5px;width:600px;text-align:center;">10</div>
<div class="a t" style="top:766.62px;font-size:8.6px;line-height:10px;color:#000;left:167.5px;width:600px;text-align:right;">7 250,40</div>
</div></div>
<div class="a" style="left:932px;top:588px;width:52px;height:17px;border:2px solid #217346;box-sizing:border-box;"></div>
<div class="a" style="left:981px;top:602px;width:5px;height:5px;background:#217346;border:1px solid #fff;box-sizing:border-box;"></div>
<svg class="a" style="left:0;top:0" width="1500" height="844" viewBox="0 0 1500 844"><path d="M17.5 8.5 H26 L28 10.5 V18.5 H17.5 Z" fill="none" stroke="#fff" stroke-width="1.2"/><rect x="19.5" y="8.5" width="6" height="3.5" fill="#fff"/><rect x="20" y="14.5" width="5.5" height="4" fill="none" stroke="#fff" stroke-width="1"/><path d="M41 11 H47 A4 4 0 0 1 47 18 H44" fill="none" stroke="#5f9a76" stroke-width="1.3"/><path d="M44 8 L40.5 11 L44 14" fill="none" stroke="#5f9a76" stroke-width="1.3"/><path d="M54.900000000000006 11.3 H58.5 L56.7 13.8 Z" fill="#5f9a76"/><path d="M77 11 H71 A4 4 0 0 0 71 18 H74" fill="none" stroke="#5f9a76" stroke-width="1.3"/><path d="M74 8 L77.5 11 L74 14" fill="none" stroke="#5f9a76" stroke-width="1.3"/><path d="M82.3 11.3 H85.89999999999999 L84.1 13.8 Z" fill="#5f9a76"/><path d="M98 7.5 V11 M96 11.5 L100 8 L104.5 12.5 L100.5 16 Z" fill="none" stroke="#fff" stroke-width="1.1"/><path d="M104.5 12.5 Q106.5 14 105.5 15.5" fill="none" stroke="#fff" stroke-width="1.3"/><rect x="94" y="16.8" width="12.5" height="2.8" fill="#ffff00"/><path d="M109.3 11.3 H113.3 L111.3 13.8 Z" fill="#fff"/><path d="M122.5 7.5 H129.5 L132 10 V19.5 H122.5 Z" fill="none" stroke="#fff" stroke-width="1.1"/><circle cx="127.5" cy="14" r="3" fill="none" stroke="#fff" stroke-width="1.3"/><path d="M129.7 16.2 L133.5 20" stroke="#fff" stroke-width="1.5"/><rect x="148" y="8.5" width="8" height="9.5" fill="none" stroke="#fff" stroke-width="1"/><path d="M148 11.5 H156 M148 14.5 H156 M152 8.5 V18" stroke="#fff" stroke-width="0.9"/><rect x="143.5" y="10.5" width="4.5" height="6" fill="none" stroke="#fff" stroke-width="1"/><path d="M246 9.5 H258 M247.5 12 H256.5 M246 14.5 H258 M247.5 17 H256.5" stroke="#fff" stroke-width="1"/><path d="M271.5 10.5 H277.5 M272 12.5 L274.5 15 L277 12.5" fill="none" stroke="#fff" stroke-width="1"/><rect x="1368.5" y="8.5" width="10.5" height="7.5" fill="none" stroke="#fff" stroke-width="1"/><path d="M1368.5 10.5 H1379 M1373.7 15.5 V11.8 M1371.8 13.5 L1373.7 11.6 L1375.6 13.5" fill="none" stroke="#fff" stroke-width="1"/><path d="M1406 12.5 H1414.5" stroke="#fff" stroke-width="1"/><rect x="1442.5" y="9.5" width="6" height="6.5" fill="none" stroke="#fff" stroke-width="1"/><path d="M1444.5 9.5 V8 H1450.5 V14 H1448.5" fill="none" stroke="#fff" stroke-width="1"/><path d="M1478 8 L1486 16 M1486 8 L1478 16" stroke="#fff" stroke-width="1.1"/><circle cx="1421" cy="36" r="3" fill="none" stroke="#fff" stroke-width="1.1"/><path d="M1415.5 45 Q1416 39.5 1421 39.5 Q1423.5 39.5 1425 41" fill="none" stroke="#fff" stroke-width="1.1"/><path d="M1424.5 43.5 H1428.5 M1426.5 41.5 V45.5" stroke="#fff" stroke-width="1"/><path d="M669.5 42 Q667 39.5 667 37 A4.5 4.5 0 0 1 676 37 Q676 39.5 673.5 42 Z M669.5 43.5 H673.5 M670 45 H673" fill="none" stroke="#fff" stroke-width="1"/><rect x="17" y="59" width="19" height="20" rx="1.2" fill="#eac282"/><rect x="21" y="59" width="11" height="3.6" rx="0.8" fill="#7b7b7b"/><circle cx="26.5" cy="58.3" r="1.8" fill="#7b7b7b"/><circle cx="26.5" cy="58.3" r="0.7" fill="#eac282"/><path d="M28.5 66 H35.3 L38.5 69.2 V80.5 H28.5 Z" fill="#fff" stroke="#8a8a8a" stroke-width="1"/><path d="M35.3 66 V69.2 H38.5" fill="none" stroke="#8a8a8a" stroke-width="0.9"/><path d="M24.8 99.8 H29.2 L27 102.3 Z" fill="#555"/><path d="M52 56 L59.5 64.3 M60 56 L52.5 64.3" stroke="#333" stroke-width="1.2"/><circle cx="52.6" cy="65.7" r="2" fill="none" stroke="#4a88c7" stroke-width="1.2"/><circle cx="59.6" cy="65.7" r="2" fill="none" stroke="#4a88c7" stroke-width="1.2"/><path d="M50 74.5 H54.5 L56.5 76.5 V81.5 H50 Z" fill="#fff" stroke="#777" stroke-width="0.9"/><path d="M54.5 77 H59 L61.5 79.5 V84.5 H54.5 Z" fill="#fff" stroke="#777" stroke-width="0.9"/><path d="M51.5 77 H53.5 M51.5 79 H53 M56 81 H60 M56 83 H60" stroke="#4a88c7" stroke-width="0.8"/><path d="M50 97.5 L55 93.5 L59 98 L55.5 102.8 Z" fill="#eac282"/><path d="M55 95 L59.5 91.5 L61 93 L57 97.5 Z" fill="#777"/><path d="M59.5 91.5 L61.8 89.8 L62.8 91 L61 93 Z" fill="#555"/><path d="M151.5 119 V114.5 H156.5" fill="none" stroke="#888" stroke-width="0.8"/><path d="M153 116 L156.5 119.5 M156.5 117 V119.5 H154" fill="none" stroke="#666" stroke-width="0.8"/><path d="M319.5 119 V114.5 H324.5" fill="none" stroke="#888" stroke-width="0.8"/><path d="M321 116 L324.5 119.5 M324.5 117 V119.5 H322" fill="none" stroke="#666" stroke-width="0.8"/><path d="M611.5 119 V114.5 H616.5" fill="none" stroke="#888" stroke-width="0.8"/><path d="M613 116 L616.5 119.5 M616.5 117 V119.5 H614" fill="none" stroke="#666" stroke-width="0.8"/><path d="M726.5 119 V114.5 H731.5" fill="none" stroke="#888" stroke-width="0.8"/><path d="M728 116 L731.5 119.5 M731.5 117 V119.5 H729" fill="none" stroke="#666" stroke-width="0.8"/><path d="M234.5 66.2 L239.5 71.5 L244.5 66.2" fill="none" stroke="#555" stroke-width="1"/><path d="M274.5 66.2 L279.5 71.5 L284.5 66.2" fill="none" stroke="#555" stroke-width="1"/><path d="M292.6 72.6 L296 65.5 L299.4 72.6 M293.8 70.2 H298.2" fill="none" stroke="#555" stroke-width="1.1"/><path d="M299 65 L301 62.6 L303 65 Z" fill="#3f7fc2"/><path d="M310.4 72.6 L313 66.5 L315.7 72.6 M311.4 70.6 H314.7" fill="none" stroke="#555" stroke-width="1"/><path d="M316 62.5 H320 L318 64.8 Z" fill="#3f7fc2"/><text x="171" y="95.3" font-family="Liberation Sans" font-weight="bold" font-size="10" fill="#333">Ж</text><text x="188.7" y="95.3" font-family="Liberation Sans" font-weight="bold" font-style="italic" font-size="10" fill="#333">К</text><text x="206.3" y="95.3" font-family="Liberation Sans" font-weight="bold" font-size="10" fill="#333">Ч</text><path d="M206 96.8 H214" stroke="#333" stroke-width="1"/><path d="M220.5 91.8 H225.5 L223 94.3 Z" fill="#555"/><path d="M231.5 85 V100" stroke="#d4d4d4" stroke-width="1"/><path d="M238.5 86.5 H248.5 V96.5 H238.5 Z M243.5 86.5 V96.5 M238.5 91.5 H248.5" fill="none" stroke="#bdbdbd" stroke-width="0.9" stroke-dasharray="1 1"/><path d="M238.5 96.5 H248.5" stroke="#666" stroke-width="1"/><path d="M254.0 91.8 H259.0 L256.5 94.3 Z" fill="#555"/><path d="M265.5 85 V100" stroke="#d4d4d4" stroke-width="1"/><path d="M276 86.5 V90 M274 90.5 L278 87 L282.5 91.5 L278.5 95 Z" fill="none" stroke="#555" stroke-width="1"/><path d="M282.5 91.5 Q284.5 93 283.5 94.5" fill="none" stroke="#3f7fc2" stroke-width="1.4"/><rect x="271.2" y="95.5" width="12.6" height="3.3" fill="#ffff00"/><path d="M288.0 91.8 H293.0 L290.5 94.3 Z" fill="#555"/><path d="M300.3 94.6 L304.2 87.8 L308 94.6 M301.6 92.4 H306.8" fill="none" stroke="#444" stroke-width="1.2"/><rect x="298" y="95.5" width="12.2" height="3" fill="#ff0000"/><path d="M314.5 91.8 H319.5 L317 94.3 Z" fill="#555"/><path d="M337.4 62 H348.4 M337.4 64.3 H348.4 M337.4 66.6 H348.4" stroke="#7d7d7d" stroke-width="0.9"/><path d="M355 65.3 H365.5 M355 67.6 H365.5 M355 69.9 H365.5" stroke="#7d7d7d" stroke-width="0.9"/><rect x="369" y="59.3" width="17" height="18" fill="#c6c6c6"/><path d="M372 69 H383 M372 71.3 H383 M372 73.6 H383" stroke="#7d7d7d" stroke-width="0.9"/><path d="M389.5 60 V76" stroke="#d4d4d4"/><text x="0" y="0" font-family="Liberation Sans" font-size="8.5" fill="#444" transform="translate(397.5 72.5) rotate(-55)">ab</text><path d="M400.5 73 L407.3 66" stroke="#444" stroke-width="1"/><path d="M408.3 65 L405 66 L407.3 68.3 Z" fill="#444"/><path d="M410.5 66.8 H415.5 L413 69.3 Z" fill="#555"/><path d="M430.5 59 V101" stroke="#d4d4d4"/><text x="437.6" y="68.3" font-family="Liberation Sans" font-size="8" fill="#444">ab</text><text x="437.8" y="74" font-family="Liberation Sans" font-size="8" fill="#444">c</text><path d="M447 69.5 V71.5 H443.8 M445 70.3 L443.5 71.5 L445 72.7" fill="none" stroke="#3f7fc2" stroke-width="0.9"/><path d="M337.4 88.4 H348.4 M337.4 90.8 H343.9 M337.4 93.3 H348.4 M337.4 95.6 H343.9 " stroke="#7d7d7d" stroke-width="0.9"/><path d="M355 88.4 H366 M357 90.8 H364 M355 93.3 H366 M357 95.6 H364 " stroke="#7d7d7d" stroke-width="0.9"/><path d="M372 88.4 H383 M376.5 90.8 H383 M372 93.3 H383 M376.5 95.6 H383 " stroke="#7d7d7d" stroke-width="0.9"/><path d="M389.5 84.5 V100.5" stroke="#d4d4d4"/><path d="M395.3 87.2 H407.8 M401 90 H407.8 M401 92.3 H407.8 M401 94.5 H407.8 M395.3 96.8 H407.8" stroke="#7d7d7d" stroke-width="0.9"/><path d="M400.5 91.8 H396 M398.5 89.5 L396 91.8 L398.5 94" fill="none" stroke="#3f7fc2" stroke-width="1.2"/><path d="M412.3 87.2 H424.9 M418 90 H424.9 M418 92.3 H424.9 M418 94.5 H424.9 M412.3 96.8 H424.9" stroke="#7d7d7d" stroke-width="0.9"/><path d="M412.5 91.8 H417 M414.7 89.5 L417 91.8 L414.7 94" fill="none" stroke="#3f7fc2" stroke-width="1.2"/><rect x="437" y="86.3" width="11.3" height="11.3" fill="#fff" stroke="#777" stroke-width="0.9"/><path d="M437 89 H448.3 M437 94.8 H448.3 M442.6 86.3 V89 M442.6 94.8 V97.6" stroke="#777" stroke-width="0.8"/><path d="M439 91.9 H446.3 M440.3 90.8 L439 91.9 L440.3 93 M445 90.8 L446.3 91.9 L445 93" fill="none" stroke="#3f7fc2" stroke-width="0.8"/><path d="M605.5 91.8 H610.5 L608 94.3 Z" fill="#555"/><path d="M715.3 66.2 L720.6 71.6 L726 66.2" fill="none" stroke="#555" stroke-width="1"/><rect x="629" y="86.2" width="12.3" height="6.6" fill="#fff" stroke="#3f7fc2" stroke-width="1.3"/><circle cx="633" cy="89.5" r="1.6" fill="#3f7fc2"/><ellipse cx="638.5" cy="92.2" rx="2.8" ry="1.2" fill="#eac282"/><rect x="635.7" y="92.2" width="5.6" height="2.5" fill="#eac282"/><ellipse cx="634.5" cy="95.5" rx="2.8" ry="1.2" fill="#eac282"/><rect x="631.7" y="95.5" width="5.6" height="2.6" fill="#eac282"/><path d="M645.5 91.3 H650.5 L648 93.8 Z" fill="#555"/><text x="656.8" y="97.3" font-family="Liberation Sans" font-size="12.5" fill="#444" textLength="10.5" lengthAdjust="spacingAndGlyphs">%</text><text x="673" y="95" font-family="Liberation Sans" font-size="7.6" fill="#444" textLength="12" lengthAdjust="spacingAndGlyphs">000</text><path d="M691 84.5 V100.5" stroke="#d4d4d4"/><text x="703" y="92.5" font-family="Liberation Sans" font-size="7.5" fill="#444">0</text><text x="697" y="98.3" font-family="Liberation Sans" font-size="7.5" fill="#444" textLength="11" lengthAdjust="spacingAndGlyphs">,00</text><path d="M702 88.7 H697.5 M699.3 87 L697.5 88.7 L699.3 90.4" fill="none" stroke="#3f7fc2" stroke-width="1.1"/><text x="714" y="92.5" font-family="Liberation Sans" font-size="7.5" fill="#444" textLength="11" lengthAdjust="spacingAndGlyphs">,00</text><text x="719" y="98.3" font-family="Liberation Sans" font-size="7.5" fill="#444">,0</text><path d="M714.5 95.3 H719.5 M717.7 93.6 L719.5 95.3 L717.7 97" fill="none" stroke="#3f7fc2" stroke-width="1.1"/><rect x="772.6" y="57.2" width="22" height="19.2" fill="#fff" stroke="#8a8a8a" stroke-width="1"/><path d="M778.6 57.2 V76.4 M783.8 57.2 V76.4 M788.2 57.2 V76.4 M772.6 62 H794.6 M772.6 66.8 H794.6 M772.6 71.6 H794.6 " stroke="#bdbdbd" stroke-width="0.8"/><rect x="779" y="57.7" width="4.4" height="4.3" fill="#e0522f"/><rect x="779" y="62.5" width="8" height="4.3" fill="#3f7fc2"/><rect x="779" y="67.3" width="6.8" height="4.3" fill="#e0522f"/><rect x="779" y="72.1" width="2.8" height="4.3" fill="#3f7fc2"/><rect x="783.8" y="70.5" width="12" height="10" rx="1" fill="#fff" stroke="#8a8a8a" stroke-width="1"/><path d="M786.5 73.8 H793 M786.5 76.6 H793 M792 72 L787.5 78.5" stroke="#333" stroke-width="0.9"/><path d="M820.5 100.6 H824.5 L822.5 103.1 Z" fill="#555"/><rect x="852.5" y="58.5" width="19.5" height="16.3" fill="#fff" stroke="#8a8a8a" stroke-width="1"/><rect x="857.5" y="62.5" width="14" height="12" fill="#c5daf0"/><path d="M857.5 58.5 V74.8 M862.3 58.5 V74.8 M867 58.5 V74.8 M852.5 62.5 H872 M852.5 66.6 H872 M852.5 70.7 H872" stroke="#bdbdbd" stroke-width="0.8"/><path d="M873.5 62 L876.5 63.5 L876 67 L869.5 74.5 L866.8 72.5 Z" fill="#777"/><path d="M866.5 72.8 L869.3 74.8 L868.3 76 L865.5 74 Z" fill="#f3f3f3"/><path d="M865.3 74.2 Q861.5 75 858.8 80.8 Q866.5 80.8 868.5 76.2 Z" fill="#3f7fc2"/><path d="M887.5 100.6 H891.5 L889.5 103.1 Z" fill="#555"/><path d="M1069 66 L1073 62 L1077 66" fill="none" stroke="#bbb" stroke-width="0.9"/><path d="M1069 77 L1073 81 L1077 77" fill="none" stroke="#555" stroke-width="0.9"/><path d="M1068.5 89.5 H1077.5 M1069 93.5 L1073 97.5 L1077 93.5" fill="none" stroke="#555" stroke-width="0.9"/><path d="M1066.5 71 H1080 M1066.5 86 H1080" stroke="#d4d4d4"/><rect x="1105" y="57.5" width="11.5" height="4" rx="0.8" fill="#fff" stroke="#8a8a8a" stroke-width="1.1"/><path d="M1110.75 57.5 V61.5" stroke="#8a8a8a" stroke-width="1"/><rect x="1113.5" y="63.5" width="11.5" height="4" rx="0.8" fill="#c5daf0" stroke="#8a8a8a" stroke-width="1.1"/><path d="M1119.25 63.5 V67.5" stroke="#8a8a8a" stroke-width="1"/><path d="M1111.5 65.5 H1106 M1108 63.3 L1105.8 65.5 L1108 67.7" fill="none" stroke="#3f7fc2" stroke-width="1.4"/><rect x="1105" y="70" width="11.5" height="8" rx="0.8" fill="#fff" stroke="#8a8a8a" stroke-width="1.1"/><path d="M1110.75 70 V78" stroke="#8a8a8a" stroke-width="1"/><path d="M1105 74 H1116.5" stroke="#8a8a8a" stroke-width="1"/><path d="M1112.5 100.3 H1117.5 L1115 102.8 Z" fill="#555"/><rect x="1144" y="57.5" width="11.5" height="4" rx="0.8" fill="#fff" stroke="#8a8a8a" stroke-width="1.1"/><path d="M1149.75 57.5 V61.5" stroke="#8a8a8a" stroke-width="1"/><rect x="1148.5" y="63.5" width="7" height="4" rx="0.8" fill="#c5daf0" stroke="#8a8a8a" stroke-width="1.1"/><rect x="1144" y="70.5" width="11.5" height="8" rx="0.8" fill="#fff" stroke="#8a8a8a" stroke-width="1.1"/><path d="M1149.75 70.5 V78.5" stroke="#8a8a8a" stroke-width="1"/><path d="M1144 74.5 H1155.5" stroke="#8a8a8a" stroke-width="1"/><path d="M1156 62 L1166 71.5 M1166 62 L1156 71.5" stroke="#e0522f" stroke-width="1.6"/><path d="M1152.5 100.3 H1157.5 L1155 102.8 Z" fill="#555"/><rect x="1182.5" y="61.3" width="21" height="16" fill="#fff" stroke="#8a8a8a" stroke-width="1"/><path d="M1188.2 61.3 V77.3 M1194 61.3 V77.3 M1199 61.3 V77.3 M1182.5 65.3 H1203.5 M1182.5 73 H1203.5" stroke="#c6c6c6" stroke-width="0.8"/><rect x="1188.4" y="65.6" width="5.4" height="7" fill="#3f7fc2"/><path d="M1182.5 77.3 V80 Q1185 81 1188 80 Q1191 81 1194 80 L1196 77.3" fill="#fff" stroke="#8a8a8a" stroke-width="0.9"/><path d="M1182.2 56.3 V60 M1200 56.3 V60 M1183 58.2 H1199.3 M1185 56.6 L1183 58.2 L1185 59.8 M1197.3 56.6 L1199.3 58.2 L1197.3 59.8" fill="none" stroke="#3f7fc2" stroke-width="0.9"/><path d="M1190.0 100.3 H1195.0 L1192.5 102.8 Z" fill="#555"/><path d="M1237.5 57.5 V56 H1227.5 L1233 61.5 L1227.5 67 H1237.5 V65.5" fill="none" stroke="#444" stroke-width="1.4"/><path d="M1297.0 60.8 H1302.0 L1299.5 63.3 Z" fill="#555"/><rect x="1227.8" y="73.8" width="9.8" height="11.6" fill="#fff" stroke="#8a8a8a" stroke-width="0.9"/><rect x="1227.5" y="73.5" width="10.3" height="2" fill="#666"/><path d="M1232.7 77.5 V83 M1230.5 80.8 L1232.7 83 L1234.9 80.8" fill="none" stroke="#3f7fc2" stroke-width="1.3"/><path d="M1289.5 78.3 H1294.5 L1292 80.8 Z" fill="#555"/><path d="M1231 92.5 L1237.3 96 L1233.8 101.3 L1227.8 98 Z" fill="#e8758d"/><path d="M1227.8 98 L1233.8 101.3 L1232.5 101.5 L1227.2 99 Z" fill="#f3b3c0"/><path d="M1283.5 97.3 H1288.5 L1286 99.8 Z" fill="#555"/><text x="1321.2" y="67" font-family="Liberation Sans" font-size="12.5" fill="#3f7fc2" stroke="#3f7fc2" stroke-width="0.4">A</text><text x="1321.8" y="78" font-family="Liberation Sans" font-size="11.3" fill="#9b59b6" stroke="#9b59b6" stroke-width="0.3">Я</text><path d="M1330.5 63 H1344 L1338.8 68.8 V74.8 L1336 73.5 V68.8 Z" fill="#777"/><path d="M1351.5 100.8 H1356.5 L1354 103.3 Z" fill="#555"/><circle cx="1388.3" cy="64.8" r="6.8" fill="#fff" stroke="#3f7fc2" stroke-width="2.1"/><path d="M1383.5 69.8 L1376.5 77" stroke="#3f7fc2" stroke-width="2.6" stroke-linecap="round"/><path d="M1405.5 100.8 H1410.5 L1408 103.3 Z" fill="#555"/><path d="M1484.5 119.5 L1489.7 115 L1494.8 119.5" fill="none" stroke="#666" stroke-width="0.9"/><path d="M72.5 140.3 H77.5 L75 142.8 Z" fill="#666"/><circle cx="95.3" cy="137" r="0.6" fill="#999"/><circle cx="95.3" cy="141" r="0.6" fill="#999"/><circle cx="95.3" cy="145" r="0.6" fill="#999"/><path d="M117.5 137.5 L124 144 M124 137.5 L117.5 144" stroke="#aaa" stroke-width="1"/><path d="M145.5 141 L148.5 144.5 L154.5 137" fill="none" stroke="#aaa" stroke-width="1.1"/><text x="173" y="145" font-family="Liberation Serif" font-style="italic" font-size="10.5" fill="#444">f</text><text x="177" y="145" font-family="Liberation Serif" font-style="italic" font-size="7.5" fill="#444">x</text><path d="M1487 142 L1489.7 139 L1492.4 142" fill="none" stroke="#555" stroke-width="1.1"/><path d="M1489 199.5 H1495 L1492 196.5 Z" fill="#555"/><path d="M1489 767 H1495 L1492 770 Z" fill="#555"/><path d="M921 782 V788 L917.5 785 Z" fill="#555"/><path d="M1476.5 782 V788 L1480 785 Z" fill="#555"/><circle cx="900.8" cy="781.5" r="0.6" fill="#999"/><circle cx="900.8" cy="784.7" r="0.6" fill="#999"/><circle cx="900.8" cy="788" r="0.6" fill="#999"/><path d="M24 781.5 L21.5 784.5 L24 787.5" fill="none" stroke="#bbb" stroke-width="1"/><path d="M44 781.5 L46.5 784.5 L44 787.5" fill="none" stroke="#bbb" stroke-width="1"/><circle cx="298.6" cy="784.5" r="5.6" fill="none" stroke="#777" stroke-width="1"/><path d="M295.6 784.5 H301.6 M298.6 781.5 V787.5" stroke="#777" stroke-width="1"/><rect x="1273.5" y="799.5" width="10" height="9" fill="none" stroke="#666" stroke-width="1"/><path d="M1276.8 799.5 V808.5 M1280.2 799.5 V808.5 M1273.5 802.5 H1283.5 M1273.5 805.5 H1283.5" stroke="#666" stroke-width="0.8"/><rect x="1304.5" y="799.5" width="10" height="9" fill="none" stroke="#777" stroke-width="1"/><rect x="1307" y="801.5" width="5" height="5" fill="none" stroke="#777" stroke-width="0.8"/><path d="M1336.5 808.5 V799.5 H1346.5 V808.5 Z M1336.5 803.5 H1341.5 V799.5" fill="none" stroke="#777" stroke-width="1"/><path d="M1361.5 804 H1367.5 M1453.5 804 H1460 M1456.7 800.8 V807.2" stroke="#555" stroke-width="1"/></svg>
<div class="a" style="left:0px;top:812px;width:1500px;height:32px;background:#877a69;"></div>
<div class="a" style="left:41px;top:813.5px;width:123.5px;height:29.5px;background:#a39a8c;border:1px solid #b9b1a5;box-sizing:border-box;"></div>
<div class="a" style="left:361.5px;top:813.5px;width:122.5px;height:29.5px;background:#a39a8c;border:1px solid #b9b1a5;box-sizing:border-box;"></div>
<div class="a" style="left:487.5px;top:813.5px;width:124.0px;height:29.5px;background:#a39a8c;border:1px solid #b9b1a5;box-sizing:border-box;"></div>
<div class="a" style="left:614px;top:813.5px;width:123.5px;height:29.5px;background:#a39a8c;border:1px solid #b9b1a5;box-sizing:border-box;"></div>
<div class="a" style="left:740.5px;top:813.5px;width:123.5px;height:29.5px;background:#b1aaa1;border:1px solid #d6d2cc;box-sizing:border-box;"></div>
<div class="a t" style="top:822.53px;left:75.6px;font-size:10px;line-height:12px;color:#f2f0ec;letter-spacing:-0.275px;">2.png - Paint</div>
<div class="a t" style="top:822.53px;left:397px;font-size:10px;line-height:12px;color:#f2f0ec;letter-spacing:-0.501px;">Новая тема - См...</div>
<div class="a t" style="top:822.53px;left:522.7px;font-size:10px;line-height:12px;color:#f2f0ec;letter-spacing:-0.478px;">ГРАНД-Смета, ве...</div>
<div class="a t" style="top:822.53px;left:649.3px;font-size:10px;line-height:12px;color:#f2f0ec;letter-spacing:-1.082px;">СМЕТЫ в ЭКСЕЛЕ</div>
<div class="a t" style="top:822.53px;left:775.5px;font-size:10px;line-height:12px;color:#f2f0ec;letter-spacing:-0.425px;">08-1 Лифты - ЛС...</div>
<div class="a t" style="top:823.78px;left:1412.5px;font-size:9.3px;line-height:11px;color:#f2f0ec;letter-spacing:-0.300px;">РУС</div>
<div class="a t" style="top:817.88px;left:1454.5px;font-size:9px;line-height:11px;color:#f2f0ec;letter-spacing:-0.506px;">10:45</div>
<div class="a t" style="top:830.88px;left:1442.5px;font-size:9px;line-height:11px;color:#f2f0ec;letter-spacing:-0.349px;">03.05.2023</div>
<svg class="a" style="left:0;top:0" width="1500" height="844" viewBox="0 0 1500 844"><path d="M9 820 L18.5 818.8 V827.2 H9 Z M19.8 818.6 L30 817.4 V827.2 H19.8 Z M9 828.6 H18.5 V837 L9 835.8 Z M19.8 828.6 H30 V838.4 L19.8 837.2 Z" fill="#fff"/><ellipse cx="58" cy="830" rx="10.5" ry="8" fill="#bfe0f5" stroke="#5c9fd0" stroke-width="0.8" transform="rotate(-20 58 830)"/><circle cx="52.5" cy="831" r="1.8" fill="#e33"/><circle cx="55.5" cy="826.5" r="1.8" fill="#4b4"/><circle cx="60.5" cy="824.5" r="1.8" fill="#fb3"/><circle cx="58" cy="832" r="1.2" fill="#7aa"/><path d="M71 817 L60 840" stroke="#e08a2a" stroke-width="1.8"/><path d="M69.5 816.5 L72.5 815 L73 818.5 Z" fill="#d9b27a"/><defs><radialGradient id="g1c" cx="0.4" cy="0.35" r="0.7"><stop offset="0" stop-color="#fff6b0"/><stop offset="0.6" stop-color="#f5d43a"/><stop offset="1" stop-color="#e2b414"/></radialGradient></defs><circle cx="189.6" cy="828.2" r="10.8" fill="url(#g1c)"/><text x="181" y="832" font-family="Liberation Sans" font-weight="bold" font-size="9" fill="#e8241a">1С</text><path d="M188 831.5 H200" stroke="#e8241a" stroke-width="1.6"/><circle cx="238.2" cy="828.2" r="11.5" fill="#4caf50"/><path d="M238.2 828.2 L228.2 822.4 A11.5 11.5 0 0 1 248.2 822.4 Z" fill="#e53935"/><path d="M238.2 828.2 L248.2 822.4 A11.5 11.5 0 0 1 238.2 839.7 Z" fill="#fbc02d"/><circle cx="238.2" cy="828.2" r="5" fill="#fff"/><circle cx="238.2" cy="828.2" r="3.8" fill="#3b78e7"/><circle cx="244.8" cy="834.6" r="6" fill="#0d4d3a"/><text x="242.2" y="837.6" font-family="Liberation Sans" font-size="7.5" fill="#fff">c</text><ellipse cx="283" cy="836" rx="6.8" ry="2.6" fill="#f3ea2a" stroke="#222" stroke-width="0.8"/><ellipse cx="283" cy="832" rx="6.8" ry="2.6" fill="#f3ea2a" stroke="#222" stroke-width="0.8"/><ellipse cx="283" cy="828" rx="6.8" ry="2.6" fill="#f3ea2a" stroke="#222" stroke-width="0.8"/><ellipse cx="283" cy="824" rx="6.8" ry="2.6" fill="#f3ea2a" stroke="#222" stroke-width="0.8"/><ellipse cx="283" cy="820" rx="6.8" ry="2.6" fill="#f3ea2a" stroke="#222" stroke-width="0.8"/><ellipse cx="285" cy="819.5" rx="6.5" ry="2.4" fill="#f7f060" stroke="#222" stroke-width="0.8"/><circle cx="293.5" cy="834" r="5.3" fill="#efe41f" stroke="#222" stroke-width="0.8"/><circle cx="335.4" cy="828.2" r="11.5" fill="#f7f7f7"/><path d="M330.2 821.3 L335.4 829 L340.6 821.3 M335.4 829 V836" fill="none" stroke="#e61400" stroke-width="1.9"/><ellipse cx="380.5" cy="828.5" rx="11" ry="11.5" fill="#e0131d"/><ellipse cx="380.5" cy="828.5" rx="4.6" ry="8.5" fill="#a39a8c"/><rect x="495" y="816" width="5" height="5" fill="#e8663a" stroke="#1c3f8a" stroke-width="0.5"/><rect x="499" y="818" width="5" height="5" fill="#e8663a" stroke="#1c3f8a" stroke-width="0.5"/><rect x="503" y="820" width="5" height="5" fill="#e8663a" stroke="#1c3f8a" stroke-width="0.5"/><rect x="495" y="822" width="5" height="5" fill="#4a79c8" stroke="#1c3f8a" stroke-width="0.5"/><rect x="499" y="824" width="5" height="5" fill="#e8663a" stroke="#1c3f8a" stroke-width="0.5"/><rect x="503" y="826" width="5" height="5" fill="#4a79c8" stroke="#1c3f8a" stroke-width="0.5"/><rect x="495" y="828" width="5" height="5" fill="#4a79c8" stroke="#1c3f8a" stroke-width="0.5"/><rect x="499" y="830" width="5" height="5" fill="#4a79c8" stroke="#1c3f8a" stroke-width="0.5"/><rect x="503" y="832" width="5" height="5" fill="#4a79c8" stroke="#1c3f8a" stroke-width="0.5"/><rect x="507" y="834" width="5" height="5" fill="#4a79c8" stroke="#1c3f8a" stroke-width="0.5"/><rect x="511" y="836" width="5" height="5" fill="#4a79c8" stroke="#1c3f8a" stroke-width="0.5"/><rect x="507" y="828" width="5" height="5" fill="#4a79c8" stroke="#1c3f8a" stroke-width="0.5"/><path d="M623 818 L633 820 V840 L623 838 Z" fill="#e8cf6a"/><path d="M625 820 L638 821.5 V840 L625 838.5 Z" fill="#f6e38d" stroke="#c9ae47" stroke-width="0.6"/><rect x="754" y="817" width="19" height="22" rx="1" fill="#21a366"/><rect x="754" y="817" width="19" height="5.5" fill="#33c481"/><rect x="754" y="828" width="19" height="5.5" fill="#107c41"/><rect x="754" y="833.5" width="19" height="5.5" fill="#185c37"/><rect x="747.5" y="822" width="13" height="12.5" rx="1" fill="#107c41"/><path d="M750.8 824.8 L757.2 831.7 M757.2 824.8 L750.8 831.7" stroke="#fff" stroke-width="1.6"/><circle cx="1207" cy="829" r="6" fill="#f7f7f7"/><path d="M1204 825.5 L1207 829.8 L1210 825.5 M1207 829.8 V833.5" fill="none" stroke="#e61400" stroke-width="1.3"/><rect x="1219.5" y="823" width="12" height="12" fill="#222"/><path d="M1220.5 830 L1225 826 L1230.5 824.5" stroke="#eee" stroke-width="1.2" fill="none"/><circle cx="1221.5" cy="823.5" r="2" fill="#e8663a"/><rect x="1238" y="826" width="12" height="6" fill="#b8c4d4"/><rect x="1240" y="823" width="8" height="3" fill="#dfe6ee"/><rect x="1240" y="831" width="8" height="4" fill="#eef2f6"/><rect x="1259" y="822" width="4" height="12" fill="#7e8a96"/><circle cx="1266" cy="832" r="3.5" fill="#2db34a"/><path d="M1277 822 V836" stroke="#eee" stroke-width="1.2"/><path d="M1277.5 822.5 H1284 V829 H1277.5" fill="#eee"/><circle cx="1285" cy="833" r="3.6" fill="#e33"/><path d="M1283.3 831.3 L1286.7 834.7 M1286.7 831.3 L1283.3 834.7" stroke="#fff" stroke-width="0.9"/><rect x="1294.5" y="823" width="9" height="7" fill="none" stroke="#eee" stroke-width="1.1"/><path d="M1299 830 V834 M1295.5 834.5 H1303" stroke="#eee" stroke-width="1.1"/><circle cx="1296" cy="824.5" r="2.5" fill="none" stroke="#eee" stroke-width="1"/><rect x="1312.5" y="822" width="13" height="13" fill="#1040d0"/><rect x="1314" y="826" width="5" height="4" fill="#fff"/><rect x="1320" y="830" width="4" height="4" fill="#fff"/><rect x="1331" y="822" width="14" height="14" fill="#f0453a"/><path d="M1334 829 L1337 826 L1340 829 L1337 832 Z M1339 829 L1342 826.5 V831.5 Z" fill="#fff"/><ellipse cx="1356.7" cy="829" rx="5.8" ry="6.5" fill="#e0131d"/><ellipse cx="1356.7" cy="829" rx="2.4" ry="4.8" fill="#877a69"/><path d="M1369 826.5 H1372 L1376 823 V835 L1372 831.5 H1369 Z" fill="#e57a3a"/><path d="M1378 825.5 Q1380.5 829 1378 832.5 M1380 823.5 Q1384 829 1380 834.5" fill="none" stroke="#ddd" stroke-width="0.9"/><path d="M1390 821.5 V836 H1398" fill="none" stroke="#eee" stroke-width="1.2"/><path d="M1394.5 827 L1399 835 H1390 Z" fill="#f5c518" stroke="#444" stroke-width="0.5"/></svg>
</body></html>
